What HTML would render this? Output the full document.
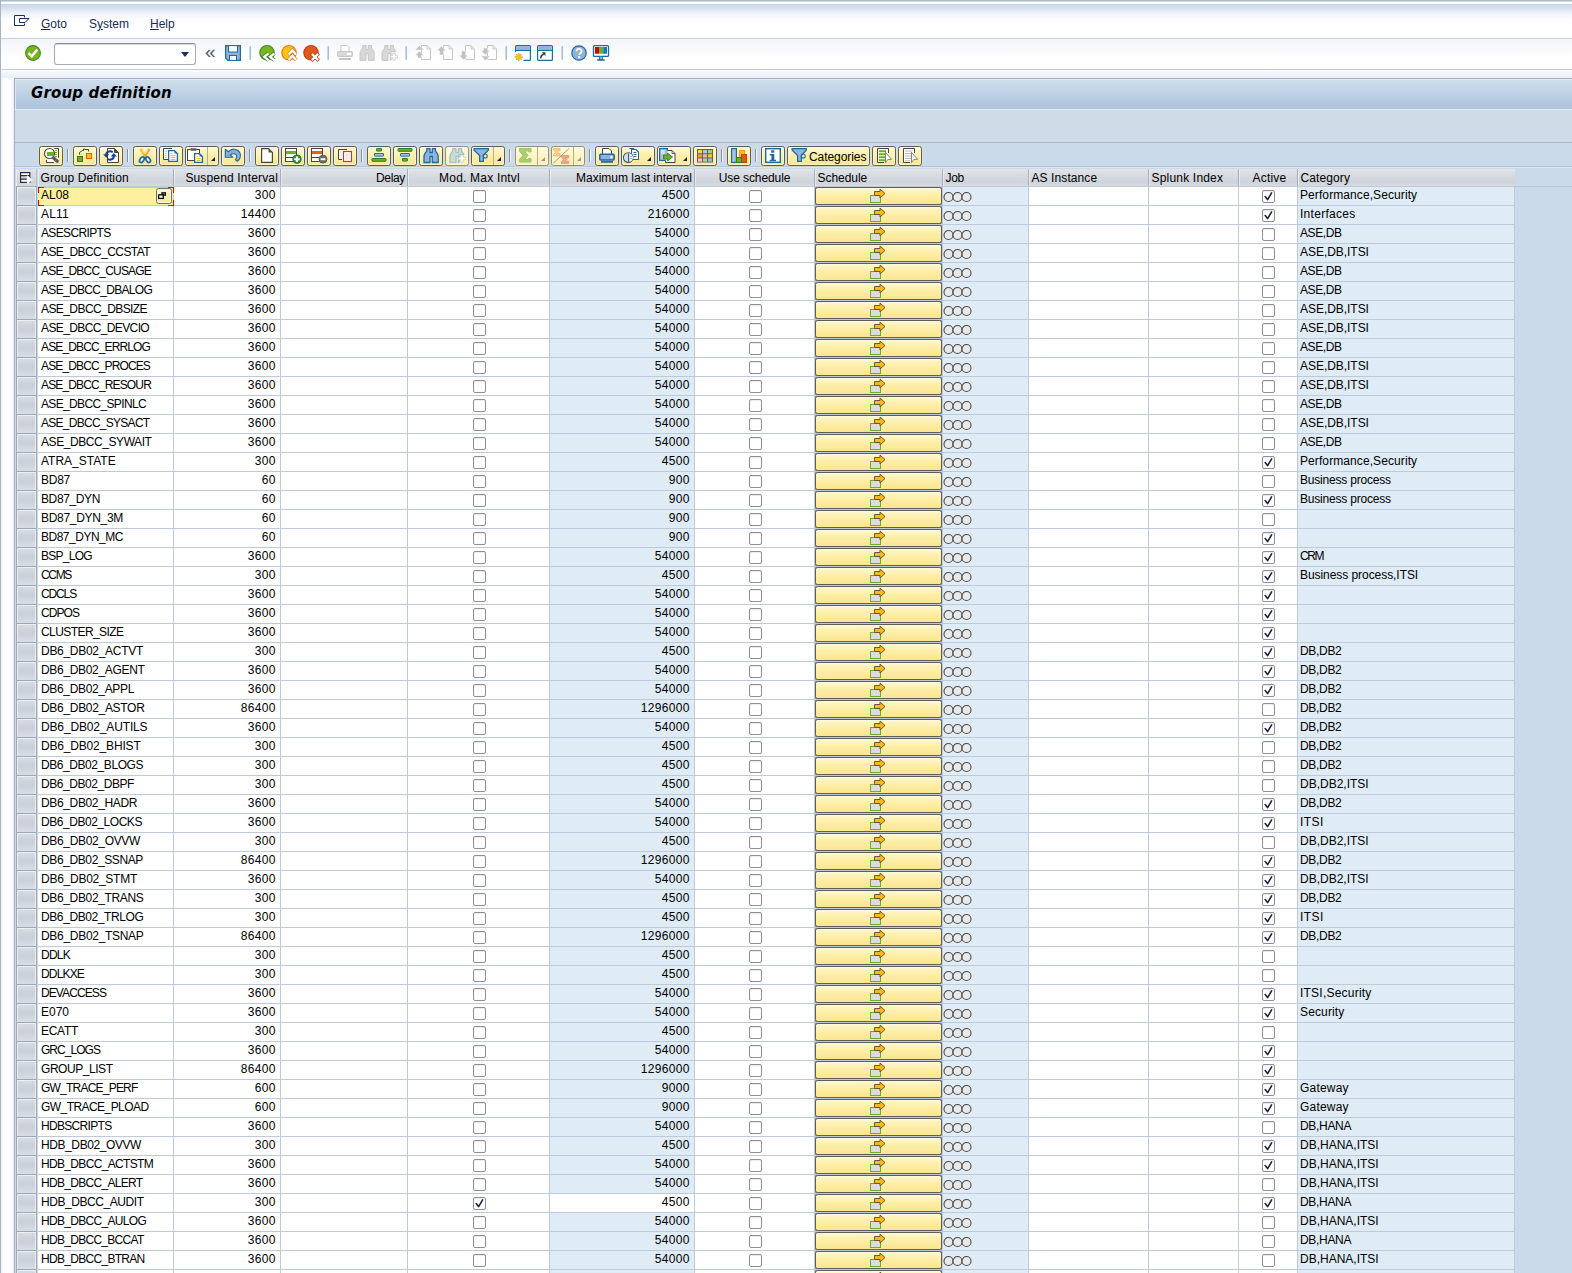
<!DOCTYPE html>
<html lang="en"><head><meta charset="utf-8"><title>Group definition</title>
<style>
html,body{margin:0;padding:0}
body{width:1572px;height:1273px;overflow:hidden;position:relative;background:#fff;font:12px/14px "Liberation Sans",sans-serif;color:#000}
div,i,b,span,svg{box-sizing:border-box}
svg{overflow:visible}
.abs{position:absolute}
#topgrad{position:absolute;left:0;top:0;width:1572px;height:38px;background:linear-gradient(#afbac7 0,#afbac7 1px,#d0dae8 1px,#d0dae8 2px,#fff 2px,#fff 4px,#c7d5e8 4px,#d6e0ed 8px,#eef2f8 13px,#fbfcfe 19px,#fff 24px)}
#l38{position:absolute;left:0;top:38px;width:1572px;height:1px;background:#c3ccda}
#tb{position:absolute;left:0;top:39px;width:1572px;height:30px;background:linear-gradient(#f2f5f9,#fafbfd 40%,#fff 70%)}
#l69{position:absolute;left:0;top:69px;width:1572px;height:1px;background:#c2cad7}
#strip{position:absolute;left:0;top:70px;width:1572px;height:8px;background:linear-gradient(#fff,#f4f6fb 30%,#e9eef7)}
#leftedge{position:absolute;left:0;top:0;width:1px;height:1273px;background:#a9b5c4}
#leftpad{position:absolute;left:1px;top:78px;width:13px;height:1195px;background:linear-gradient(90deg,#f1f2f4,#fdfdfd 3px,#fff 9px,#f4f6f9 12px,#e4e9f0)}
#title{position:absolute;left:14px;top:78px;width:1558px;height:31px;box-shadow:inset 1px 0 0 #dbe6f1;border-left:1px solid #9db0c8;border-top:1px solid #9db0c8;background:linear-gradient(#e6eef6 0,#e6eef6 1px,#cfdeec 1px,#bccfe3 55%,#abc2dc 100%)}
#title span{position:absolute;left:16px;top:5px;font:italic bold 15px/18px "DejaVu Sans","Liberation Sans",sans-serif;letter-spacing:0.15px;color:#000;white-space:nowrap}
#sub{position:absolute;left:14px;top:109px;width:1558px;height:33px;border-left:1px solid #a3b4ca;background:#cfdce8;border-top:1px solid #e3ebf3}
#l142{position:absolute;left:14px;top:142px;width:1558px;height:1px;background:#a7b6c8}
#panel{position:absolute;left:14px;top:143px;width:1558px;height:1130px;border-left:1px solid #a3b4ca;background:#cbdaea}
#l166{position:absolute;left:15px;top:166px;width:1557px;height:1px;background:#b7c6d8}
#l167{position:absolute;left:15px;top:167px;width:1557px;height:1px;background:#dbe6f1}
#l186{position:absolute;left:1515px;top:186px;width:57px;height:1px;background:#b7c5d7}
/* menu */
.menu{position:absolute;top:17px;color:#1a2a55;white-space:nowrap}
.menu u{text-decoration:underline;text-underline-offset:1px}
/* system toolbar */
.ti{position:absolute;top:45px;width:16px;height:16px}
.tsep{position:absolute;top:46px;width:2px;height:14px;margin-left:-1px;background:linear-gradient(90deg,#c9d9ef 50%,#a3bde0 50%);border-radius:1px}
#cmd{position:absolute;left:54px;top:43px;width:142px;height:22px;border:1px solid #a9abae;border-top-color:#8a8c8f;border-radius:3px;background:#fff;box-shadow:inset 0 1px 1px #d9d9d9}
#cmd:after{content:"";position:absolute;left:125.500px;top:7.500px;border:4.700px solid transparent;border-top:5px solid #1d2f5f;border-bottom:0}
/* alv toolbar */
.bt{position:absolute;top:146px;height:20px;width:24px;border:1px solid #5b5c5e;border-radius:2.5px;background:linear-gradient(#fff8d6,#fdf0ad 45%,#fbe58c);box-shadow:inset 0 0 0 1px rgba(255,250,215,.7), 0 0 0 1px rgba(255,236,150,.35)}
.bt svg{position:absolute;left:3px;top:1px}
.bt.w svg{left:1px}
.bt.dis{border-color:#908e86;background:linear-gradient(#fffbe6,#fef5c9 45%,#fdefb0)}
.bt .dd{position:absolute;right:0;top:0;width:11px;height:18px;border-left:1px solid #b9ae86}
.bt .dd:after{content:"";position:absolute;right:3px;bottom:4px;border:2.5px solid transparent;border-right-color:#1c1c2e;border-bottom-color:#1c1c2e}
.bt.dis .dd:after{border-right-color:#999;border-bottom-color:#999}
.bt .lbl{position:absolute;left:21px;top:3px;white-space:nowrap}
.bsep{position:absolute;top:149px;width:2px;height:13px;border-left:1px solid #8e8f92;border-right:1px solid #f4f7fa}
/* grid */
#grid{position:absolute;left:0;top:0;width:1572px;height:1273px;overflow:hidden}
#gridbg{position:absolute;left:16px;top:169px;width:1499px;height:1104px;background:#bec9d9}
.hrow{position:absolute;left:0;top:169px;height:17px;width:1572px}
.h{position:absolute;top:0;height:17px;line-height:19px;padding-top:0;white-space:nowrap;overflow:hidden;color:#000;background:linear-gradient(#e1e4e8,#d2d6dd 60%,#cfd4db 80%,#d9dde2);border-right:1px solid #a3afc0;padding:0 3px;box-shadow:inset 1px 0 0 rgba(255,255,255,.45)}
.h.l{text-align:left;padding-left:2.500px}.h.r{text-align:right;padding-right:2px}.h.c{text-align:center}
.h.c11{padding:0 1px 0 4px}
.h.c4{padding:0 2px 0 4px}
.row{position:absolute;left:0;height:18px;width:1572px}
.d{position:absolute;top:0;height:18px;line-height:17px;background:#fff;white-space:nowrap;overflow:hidden;padding:0 4.2px 0 3px}
.d.r{text-align:right}
.d.ro{background:#dfebf5}
.c0{left:16px;width:21px}
.d.c0{left:16px;width:21px;background:linear-gradient(#d8dce2,#cacfd8 50%,#d9dde3);border-left:1px solid #9aa8ba;border-right:1px solid #9aa8ba;padding:0;box-shadow:0 1px 0 #9aa8ba,0 -1px 0 #9aa8ba,inset 1px 1px 0 #eceef2,inset -1px 0 0 #eceef2;overflow:visible}
#v37{position:absolute;left:37px;top:169px;width:1px;height:1104px;background:#c9d9ea}
.c1{left:38px;width:135px}
.c2{left:174px;width:106px}
.c3{left:281px;width:126px}
.c4{left:408px;width:141px}
.c5{left:550px;width:144px}
.c6{left:695px;width:119px}
.c7{left:815px;width:127px}
.c8{left:943px;width:85px}
.c9{left:1029px;width:119px}
.c10{left:1149px;width:89px}
.c11{left:1239px;width:58px}
.c12{left:1298px;width:216px}
.d.c12{padding-left:2px}
.h.c1{width:136px}.h.c2{width:107px}.h.c3{width:127px}.h.c4{width:142px}.h.c5{width:145px}.h.c6{width:120px}.h.c7{width:128px}.h.c8{width:86px}.h.c9{width:120px}.h.c10{width:90px}.h.c11{width:59px}.h.c12{width:217px;border-right:0}
.h.c0{border-right:1px solid #b5c2d4;padding:0;width:21px}
.h.c0 svg{position:absolute;left:4px;top:3px}
.d.c7{padding:0;background:#8d98aa;overflow:visible}
.sb{position:absolute;left:0;top:0;width:127px;height:18px;border:1px solid #5e5d5a;border-radius:2.5px;background:linear-gradient(#fffbe3 0,#fff5c3 2px,#fdeea5 50%,#fbe690 100%)}
.sb svg{position:absolute;left:52px;top:-1px}
.d.c4,.d.c6,.d.c11{padding:0}
.cb{position:absolute;top:3px;width:13px;height:13px;border:1px solid #8d8f93;border-radius:2px;background:#fff;box-shadow:inset 0 1px 1px #ececee}
.cb svg{position:absolute;left:0;top:0}
.c4 .cb{left:65px}.c6 .cb{left:54px}.c11 .cb{left:23px}
.d.c8{padding:0}
.job{position:absolute;left:0;top:4px}
.foc{background:#fef09e !important;overflow:visible !important;box-shadow:inset 0 1px 0 #bccbdc}
.foc:before{content:"";position:absolute;left:0;top:0;width:136px;height:19px;
 background:
 linear-gradient(#e8000f,#e8000f) 0 0/6px 1px no-repeat,
 linear-gradient(#e8000f,#e8000f) 0 0/1px 6px no-repeat,
 linear-gradient(#e8000f,#e8000f) 100% 0/6px 1px no-repeat,
 linear-gradient(#e8000f,#e8000f) 100% 0/1px 6px no-repeat,
 linear-gradient(#e8000f,#e8000f) 0 100%/6px 1px no-repeat,
 linear-gradient(#e8000f,#e8000f) 0 100%/1px 6px no-repeat,
 linear-gradient(#e8000f,#e8000f) 100% 100%/6px 1px no-repeat,
 linear-gradient(#e8000f,#e8000f) 100% 100%/1px 6px no-repeat;z-index:3}
.f4{position:absolute;left:118px;top:1px;width:16px;height:16px;border:1px solid #6f6e6a;border-radius:2.5px;background:linear-gradient(#fffbe2,#fdf0b0 50%,#fce994);box-shadow:inset 0 0 0 1px rgba(255,251,225,.8)}
.f4 svg{position:absolute;left:0;top:0}

</style></head>
<body>
<div id="topgrad"></div><div id="l38"></div><div id="tb"></div><div id="l69"></div><div id="strip"></div>
<div id="leftpad"></div><div id="leftedge"></div>
<div id="title"><span>Group definition</span></div><div id="sub"></div><div id="l142"></div><div id="panel"></div><div id="l166"></div><div id="l167"></div><div id="l186"></div>
<div class="abs" style="left:14px;top:15px;width:16px;height:12px"><svg width="16" height="12" viewBox="0 0 16 12"><path d="M10.500 2.500 V0.500 H0.500 V10.500 H10.500 V8.500" fill="none" stroke="#1a2e5e"/><path d="M15 3.500 H5.500 V7.500 H11 Z" fill="none" stroke="#1a2e5e"/></svg></div>
<div class="menu" style="left:41px"><u>G</u>oto</div>
<div class="menu" style="left:89px">S<u>y</u>stem</div>
<div class="menu" style="left:150px"><u>H</u>elp</div>
<div class="ti" style="left:25px"><svg width="16" height="16" viewBox="0 0 16 16"><circle cx="8" cy="8" r="7.4" fill="#7ab51d" stroke="#3f8a2c" stroke-width="1.1"/><path d="M3.600 8.200 L6.800 11.300 L12.300 4.500" fill="none" stroke="#fff" stroke-width="2.400" stroke-linejoin="miter"/></svg></div>
<div id="cmd"></div>
<div class="abs" style="left:205px;top:42px;font-size:19px;line-height:20px;color:#595959">&laquo;</div>
<div class="ti" style="left:225px"><svg width="16" height="16" viewBox="0 0 16 16"><path d="M0.600 0.600 H15.400 V15.400 H3 L0.600 13 Z" fill="#8fb2dc" stroke="#1b6aa5" stroke-width="1.200"/><rect x="3.500" y="0.600" width="9" height="6.400" fill="#fff" stroke="#1b6aa5"/><rect x="4.500" y="10.500" width="7" height="4.900" fill="#fff" stroke="#1b6aa5"/></svg></div>
<div class="tsep" style="left:250px"></div>
<div class="ti" style="left:259px"><svg width="16" height="16" viewBox="0 0 16 16"><circle cx="8" cy="7.7" r="7.2" fill="#79b51c" stroke="#3f8a2c" stroke-width="1.1"/><path d="M9.6 8.3 L5.3 11.8 L9.6 15.3 M15.400 8.300 L11.100 11.800 L15.400 15.300" fill="none" stroke="#3a832b" stroke-width="3.7"/><path d="M9.6 8.3 L5.3 11.8 L9.6 15.3 M15.400 8.300 L11.100 11.800 L15.400 15.300" fill="none" stroke="#fff" stroke-width="2.3"/></svg></div>
<div class="ti" style="left:281px"><svg width="16" height="16" viewBox="0 0 16 16"><circle cx="8" cy="7.7" r="7.2" fill="#fdc414" stroke="#e8731a" stroke-width="1.1"/><path d="M7.700 9.600 L11.400 5.300 L15.100 9.600 M7.700 15.100 L11.400 10.800 L15.100 15.100" fill="none" stroke="#e8731a" stroke-width="3.7"/><path d="M7.700 9.600 L11.400 5.300 L15.100 9.600 M7.700 15.100 L11.400 10.800 L15.100 15.100" fill="none" stroke="#fff" stroke-width="2.3"/></svg></div>
<div class="ti" style="left:303px"><svg width="16" height="16" viewBox="0 0 16 16"><circle cx="8" cy="7.7" r="7.2" fill="#dd5a1b" stroke="#c2401a" stroke-width="1.1"/><path d="M9.700 9.700 L14.300 14.300 M14.300 9.700 L9.700 14.300" fill="none" stroke="#b8371a" stroke-width="3.700" stroke-linecap="square"/><path d="M9.700 9.700 L14.300 14.300 M14.300 9.700 L9.700 14.300" fill="none" stroke="#fff" stroke-width="2.300" stroke-linecap="square"/></svg></div>
<div class="tsep" style="left:328px"></div>
<div class="ti" style="left:337px"><svg width="16" height="16" viewBox="0 0 16 16"><path d="M4 6 V0.5 H10 L12 2.5 V6" fill="#fff" stroke="#c6c6c6"/><rect x="0.5" y="6.5" width="15" height="5" rx="1" fill="#d9d9d9" stroke="#c6c6c6"/><rect x="10" y="8" width="4" height="2" fill="#fff"/><rect x="2" y="13" width="12" height="2" fill="#c6c6c6"/></svg></div>
<div class="ti" style="left:359px"><svg width="16" height="16" viewBox="0 0 16 16"><path d="M3.800 0.600 H7 V4.500 H9.300 V0.600 H12.500 V3 C13.500 4.500 15.200 6 15.200 8 V15.400 H9.300 V8.500 H7 V15.400 H1 V8 C1 6 2.800 4.500 3.800 3 Z" fill="#d9d9d9" stroke="#c6c6c6"/></svg></div>
<div class="ti" style="left:381px"><svg width="16" height="16" viewBox="0 0 16 16"><path d="M3.800 0.600 H7 V4.500 H9.300 V0.600 H12.500 V3 C13.300 4.300 14.300 5.300 14.800 6.500 H10 V15.400 H9.300 V8.500 H7 V15.400 H1 V8 C1 6 2.800 4.500 3.800 3 Z" fill="#d9d9d9" stroke="#c6c6c6"/><path d="M11.800 8 H14.200 V10.300 H16.500 V12.700 H14.200 V15 H11.800 V12.700 H9.500 V10.300 H11.800 Z" fill="#fff" stroke="#c6c6c6" stroke-width="0.800"/></svg></div>
<div class="tsep" style="left:406px"></div>
<div class="ti" style="left:415px"><svg width="16" height="16" viewBox="0 0 16 16"><path d="M6.500 0.500 H12 L15.500 4 V14.500 H6.500 Z" fill="#fff" stroke="#c6c6c6"/><path d="M12 0.500 V4 H15.500" fill="none" stroke="#c6c6c6"/><path d="M4.500 0.500 L9 5 H0 Z M4.500 6 L9 10.500 H6.500 V13 H2.500 V10.500 H0 Z" fill="#c2c2c2" stroke="#fff" stroke-width="0.500"/></svg></div>
<div class="ti" style="left:437px"><svg width="16" height="16" viewBox="0 0 16 16"><path d="M6.500 0.500 H12 L15.500 4 V14.500 H6.500 Z" fill="#fff" stroke="#c6c6c6"/><path d="M12 0.500 V4 H15.500" fill="none" stroke="#c6c6c6"/><path d="M4.500 1 L9 5.800 H6.500 V10 H2.500 V5.800 H0 Z" fill="#c2c2c2" stroke="#fff" stroke-width="0.500"/></svg></div>
<div class="ti" style="left:459px"><svg width="16" height="16" viewBox="0 0 16 16"><path d="M6.500 0.500 H12 L15.500 4 V14.500 H6.500 Z" fill="#fff" stroke="#c6c6c6"/><path d="M12 0.500 V4 H15.500" fill="none" stroke="#c6c6c6"/><path d="M4.500 15 L9 10.200 H6.500 V6 H2.500 V10.200 H0 Z" fill="#c2c2c2" stroke="#fff" stroke-width="0.500"/></svg></div>
<div class="ti" style="left:481px"><svg width="16" height="16" viewBox="0 0 16 16"><path d="M6.500 0.500 H12 L15.500 4 V14.500 H6.500 Z" fill="#fff" stroke="#c6c6c6"/><path d="M12 0.500 V4 H15.500" fill="none" stroke="#c6c6c6"/><path d="M4.500 15.500 L9 11 H0 Z M4.500 10 L9 5.500 H6.500 V3 H2.500 V5.500 H0 Z" fill="#c2c2c2" stroke="#fff" stroke-width="0.500"/></svg></div>
<div class="tsep" style="left:506px"></div>
<div class="ti" style="left:515px"><svg width="16" height="16" viewBox="0 0 16 16"><path d="M8.500 15.400 H14.400 Q15.400 15.400 15.400 14.400 V1.600 Q15.400 0.600 14.400 0.600 H1.600 Q0.600 0.600 0.600 1.600 V7" fill="#fff" stroke="#1b6aa5" stroke-width="1.200"/><rect x="1.200" y="1.200" width="13.600" height="3.800" fill="#8fb3dc"/><path d="M0.600 5.500 H15.400" stroke="#1b6aa5"/><path d="M6.30 12.00 L7.80 12.00 M5.54 13.84 L6.60 14.90 M3.70 14.60 L3.70 16.10 M1.86 13.84 L0.80 14.90 M1.10 12.00 L-0.40 12.00 M1.86 10.16 L0.80 9.10 M3.70 9.40 L3.70 7.90 M5.54 10.16 L6.60 9.10" stroke="#f39a1d" stroke-width="1.300"/><circle cx="3.700" cy="12" r="2.600" fill="#fdc414" stroke="#f7a81c" stroke-width="0.600"/></svg></div>
<div class="ti" style="left:537px"><svg width="16" height="16" viewBox="0 0 16 16"><rect x="0.600" y="0.600" width="14.800" height="14.800" rx="1" fill="#fff" stroke="#1b6aa5" stroke-width="1.200"/><rect x="1.200" y="1.200" width="13.600" height="3.800" fill="#8fb3dc"/><path d="M0.600 5.500 H15.400" stroke="#1b6aa5"/><path d="M3.800 13.400 C3.600 11 4.800 9.700 6.800 9.200" fill="none" stroke="#3a3a3a" stroke-width="1.600"/><path d="M4.600 7.200 H8.400 V11 Z" fill="#3a3a3a"/></svg></div>
<div class="tsep" style="left:562px"></div>
<div class="ti" style="left:571px"><svg width="16" height="16" viewBox="0 0 16 16"><circle cx="8" cy="8" r="7.2" fill="#8fb3dc" stroke="#1b6aa5" stroke-width="1.2"/><path d="M5.6 6.3 C5.6 3.2 10.6 3.2 10.6 6.2 C10.6 8.2 8.2 8 8.2 10" fill="none" stroke="#fff" stroke-width="1.8"/><rect x="7.2" y="11.2" width="2" height="2" fill="#fff"/></svg></div>
<div class="ti" style="left:593px"><svg width="16" height="16" viewBox="0 0 16 16"><rect x="0.500" y="0.600" width="15" height="10.800" rx="1" fill="#fff" stroke="#1b6aa5" stroke-width="1.300"/><rect x="2" y="2" width="4" height="6.700" fill="#d40000"/><rect x="6" y="2" width="4.200" height="6.700" fill="#6db01f"/><rect x="10.200" y="2" width="3.800" height="6.700" fill="#0a7ac4"/><rect x="6.500" y="11.400" width="3" height="3.200" fill="#8fb3dc" stroke="#1b6aa5" stroke-width="0.800"/><rect x="4.200" y="14.300" width="7.700" height="1.500" rx="0.500" fill="#1b6aa5"/></svg></div>
<div class="bt" style="left:39px;width:24px"><svg width="16" height="16" viewBox="0 0 16 16"><path d="M11.5 0.5 H15.5 V9.5" fill="none" stroke="#444"/><path d="M3.5 12 V14.5 H10.5" fill="none" stroke="#444"/><rect x="4" y="1" width="11" height="13" fill="#fff"/><path d="M11.5 0.5 H15.5 V9.5 M3.5 12 V14.5 H10.5" fill="none" stroke="#444"/><circle cx="6.5" cy="5.500" r="5" fill="#fff" stroke="#444" stroke-width="1.100"/><rect x="4" y="4" width="7" height="4" fill="#6db01f"/><path d="M12 2.500 H14 M12 4.500 H14 M12 6.500 H14 M12 8.500 H14" stroke="#6db01f"/><path d="M10.600 10 L14.300 13.300" stroke="#5c5c5c" stroke-width="3.200" stroke-linecap="round"/></svg></div>
<div class="bsep" style="left:67px"></div>
<div class="bt" style="left:73px;width:24px"><svg width="16" height="16" viewBox="0 0 16 16"><rect x="0.500" y="8.500" width="5" height="5" fill="#6db01f" stroke="#2f7d32"/><rect x="9.500" y="5.500" width="5" height="5" fill="#fdc414" stroke="#e0601b"/><path d="M2.500 6.500 V4.500 L5.500 2.500 H6.500 V1 H7.500 V1.500 H11.500 V3.500" fill="none" stroke="#444"/></svg></div>
<div class="bt" style="left:99px;width:24px"><svg width="16" height="16" viewBox="0 0 16 16"><path d="M4.500 0.500 H11.500 L15.500 4.500 V14.500 H4.500 Z" fill="#fff" stroke="#444"/><path d="M11.500 0.500 V4.500 H15.500 Z" fill="#555" stroke="#444"/><path d="M0.200 6.300 H6.200 L3.200 9.800 Z" fill="#1c3f94"/><path d="M3.200 7 C3 4 6.500 2.300 9.800 4.200" fill="none" stroke="#1c3f94" stroke-width="2"/><path d="M7.800 8.500 H13.800 L10.800 5 Z" fill="#1c3f94"/><path d="M10.800 8 C11 11 7.500 12.700 4.200 10.800" fill="none" stroke="#1c3f94" stroke-width="2"/></svg></div>
<div class="bsep" style="left:127px"></div>
<div class="bt" style="left:133px;width:24px"><svg width="16" height="16" viewBox="0 0 16 16"><path d="M3.700 1 L8.400 8" stroke="#fdb913" stroke-width="2.700"/><path d="M12.300 1 L7.600 8" stroke="#f5a31a" stroke-width="2.700"/><path d="M5 1.500 L8 6 L11 1.500" fill="none" stroke="#fff6d5" stroke-width="0.900"/><ellipse cx="4.900" cy="11.700" rx="1.900" ry="3.100" transform="rotate(32 4.900 11.700)" fill="#fff" stroke="#1b6aa5" stroke-width="1.700"/><ellipse cx="11.100" cy="11.700" rx="1.900" ry="3.100" transform="rotate(-32 11.100 11.700)" fill="#fff" stroke="#1b6aa5" stroke-width="1.700"/></svg></div>
<div class="bt" style="left:159px;width:24px"><svg width="16" height="16" viewBox="0 0 16 16"><path d="M9 0.500 H0.500 V11.500 H5" fill="#fff" stroke="#444"/><path d="M2 3.500 H3.500 M2 5.500 H3.500 M2 7.500 H3.500 M2 9.500 H3.500" stroke="#b5b5b5"/><path d="M5.600 2.600 H11.500 L14.400 5.500 V13.400 H5.600 Z" fill="#fff" stroke="#1b6aa5" stroke-width="1.300"/><path d="M11.500 2.600 V5.500 H14.400 Z" fill="#1b6aa5"/><path d="M7.500 5.500 H9.500 M7.500 7.500 H12.500 M7.500 9.500 H12.500 M7.500 11.500 H12.500" stroke="#fdb913" stroke-width="1.200"/></svg></div>
<div class="bt w" style="left:185px;width:34px"><svg width="16" height="16" viewBox="0 0 16 16"><rect x="0.500" y="1.500" width="12" height="11" fill="#fff" stroke="#444"/><rect x="3.300" y="0.300" width="6.600" height="2.500" rx="1.200" fill="#5a5a5a"/><path d="M7.600 5.600 H12.500 L15.400 8.500 V14.400 H7.600 Z" fill="#fff" stroke="#1b6aa5" stroke-width="1.300"/><path d="M12.500 5.600 V8.500 H15.400 Z" fill="#1b6aa5"/><path d="M9.500 8.500 H11 M9.500 10.500 H13.500 M9.500 12.500 H13.500" stroke="#fdb913" stroke-width="1.200"/></svg><i class="dd"></i></div>
<div class="bt" style="left:221px;width:24px"><svg width="16" height="16" viewBox="0 0 16 16"><path d="M0.300 1.300 V9.300 H8 L5.300 7 C7.500 5 11.300 5.300 11.800 8.300 C12 10 11 11 10.200 11.600 L12.300 13.300 C15 11.500 16.300 8 14.700 4.600 C12.700 0.600 7 -0.200 3.300 3.700 Z" fill="#86afd8" stroke="#1b6aa5" stroke-width="1.100" stroke-linejoin="round"/></svg></div>
<div class="bsep" style="left:249px"></div>
<div class="bt" style="left:255px;width:24px"><svg width="16" height="16" viewBox="0 0 16 16"><path d="M2.600 0.600 H9.500 L13.400 4.500 V14.400 H2.600 Z" fill="#fff" stroke="#444" stroke-width="1.200"/><path d="M9.500 0.600 V4.500 H13.400 Z" fill="#555"/></svg></div>
<div class="bt" style="left:281px;width:24px"><svg width="16" height="16" viewBox="0 0 16 16"><rect x="0.500" y="0.500" width="11" height="13" fill="#fff" stroke="#444"/><rect x="1" y="3" width="10" height="3" fill="#6db01f"/><path d="M0.500 9.500 H11.500" stroke="#444"/><circle cx="12" cy="11.200" r="4.100" fill="#348f41" stroke="#24702f" stroke-width="1"/><path d="M12 8.500 V13.900 M9.300 11.200 H14.700" stroke="#fff" stroke-width="2.100"/></svg></div>
<div class="bt" style="left:307px;width:24px"><svg width="16" height="16" viewBox="0 0 16 16"><rect x="0.500" y="0.500" width="11" height="13" fill="#fff" stroke="#444"/><rect x="1" y="3" width="10" height="3" fill="#e0601b"/><path d="M0.500 9.500 H11.500" stroke="#444"/><circle cx="12" cy="11.200" r="3.900" fill="#6e6e6e" stroke="#555" stroke-width="1"/><path d="M9.600 11.200 H14.400" stroke="#fff" stroke-width="2"/></svg></div>
<div class="bt" style="left:333px;width:24px"><svg width="16" height="16" viewBox="0 0 16 16"><path d="M10 1.500 H1.500 V11.500 H5" fill="#f2f2f2" stroke="#444"/><rect x="6.600" y="3.600" width="7.800" height="9.800" fill="#ececec" stroke="#c0392b" stroke-width="1.300"/><rect x="7.700" y="4.700" width="5.600" height="7.600" fill="none" stroke="#fff" stroke-width="0.900"/></svg></div>
<div class="bsep" style="left:361px"></div>
<div class="bt" style="left:367px;width:24px"><svg width="16" height="16" viewBox="0 0 16 16"><rect x="5.500" y="0.500" width="5" height="2.600" rx="0.400" fill="#6db01f" stroke="#2f7d32"/><rect x="3.500" y="5.500" width="9" height="2.600" rx="0.400" fill="#a8c4e2" stroke="#1b6aa5"/><rect x="1" y="10.500" width="14" height="2.800" rx="0.400" fill="#6db01f" stroke="#2f7d32"/></svg></div>
<div class="bt" style="left:393px;width:24px"><svg width="16" height="16" viewBox="0 0 16 16"><rect x="1" y="0.500" width="14" height="2.800" rx="0.400" fill="#6db01f" stroke="#2f7d32"/><rect x="3.500" y="5.500" width="9" height="2.600" rx="0.400" fill="#a8c4e2" stroke="#1b6aa5"/><rect x="5.500" y="10.500" width="5" height="2.600" rx="0.400" fill="#6db01f" stroke="#2f7d32"/></svg></div>
<div class="bt" style="left:419px;width:24px"><svg width="16" height="16" viewBox="0 0 16 16"><path d="M3.800 0.600 H7 V4.500 H9.300 V0.600 H12.500 V3 C13.500 4.500 15.200 6 15.200 8 V14.500 H9.300 V8.500 H7 V14.500 H1 V8 C1 6 2.800 4.500 3.800 3 Z" fill="#8fb3dc" stroke="#1b6aa5" stroke-width="1.300" stroke-linejoin="round"/></svg></div>
<div class="bt dis" style="left:445px;width:24px"><svg width="16" height="16" viewBox="0 0 16 16"><path d="M3.800 0.600 H7 V4.500 H9.300 V0.600 H12.500 V3 C13.300 4.300 14.300 5.300 14.800 6.500 H10 V14.500 H9.300 V8.500 H7 V14.500 H1 V8 C1 6 2.800 4.500 3.800 3 Z" fill="#cbdbd6" stroke="#9fc0c4" stroke-width="1.200" stroke-linejoin="round"/><path d="M11.800 7 H14.200 V9.300 H16.500 V11.700 H14.200 V14 H11.800 V11.700 H9.500 V9.300 H11.800 Z" fill="#fff" stroke="#c3cfcc" stroke-width="0.800"/></svg></div>
<div class="bt w" style="left:471px;width:34px"><svg width="16" height="16" viewBox="0 0 16 16"><path d="M1 0.600 H15.400 V2 L10.400 7.500 V13.400 H6.600 V7.500 L1 2 Z" fill="#8fb3dc" stroke="#1b6aa5" stroke-width="1.200" stroke-linejoin="round"/><circle cx="12.200" cy="8" r="2" fill="none" stroke="#1b6aa5" stroke-width="1.100"/></svg><i class="dd"></i></div>
<div class="bsep" style="left:509px"></div>
<div class="bt dis w" style="left:515px;width:34px"><svg width="16" height="16" viewBox="0 0 16 16"><path d="M2.500 0.500 H14 V4 H11.500 V3 H7.500 L11 7.300 L7.500 11.500 H11.500 V10.500 H14 V14 H2.500 V11.500 L6 7.300 L2.500 3 Z" fill="#a9d06f" stroke="#9bc463" stroke-width="1"/></svg><i class="dd"></i></div>
<div class="bt dis w" style="left:551px;width:34px"><svg width="16" height="16" viewBox="0 0 16 16"><path d="M0.500 0.500 H7 V3 H5.500 V2.500 H3.500 L5.500 4.200 L3.500 6 H5.500 V5.500 H7 V8 H0.500 V6.500 L2.500 4.200 L0.500 2 Z" fill="#fcd58a" stroke="#f7b36b" stroke-width="0.800"/><path d="M8.500 7.500 H15.500 V10 H14 V9.500 H12 L14 11.500 L12 13.500 H14 V13 H15.500 V15.500 H8.500 V14 L10.500 11.500 L8.500 9 Z" fill="#f0a97f" stroke="#e6926a" stroke-width="0.800"/><path d="M0 15.500 L16 0.500" stroke="#777" stroke-width="0.700"/></svg><i class="dd"></i></div>
<div class="bsep" style="left:589px"></div>
<div class="bt" style="left:595px;width:24px"><svg width="16" height="16" viewBox="0 0 16 16"><path d="M3.500 6 V0.500 H10 L12.500 3 V6" fill="#fff" stroke="#444"/><rect x="0.800" y="6.300" width="14.400" height="5.600" rx="1" fill="#8fb3dc" stroke="#1b6aa5" stroke-width="1.500"/><rect x="11.500" y="8" width="2" height="2.300" fill="#fff"/><path d="M2 13.900 H14" stroke="#1b6aa5" stroke-width="1.700"/></svg></div>
<div class="bt w" style="left:621px;width:34px"><svg width="16" height="16" viewBox="0 0 16 16"><path d="M6.500 0.500 H11 V6" fill="#fff" stroke="#1b6aa5"/><path d="M8.500 1.500 H13 L15.500 4 V11.500 H8.500 Z" fill="#fff" stroke="#1b6aa5" stroke-width="1.100"/><path d="M10.500 4.500 H13.500 M10.500 6.500 H13.500 M10.500 8.500 H13.500" stroke="#1b6aa5"/><circle cx="5.200" cy="9.600" r="4.800" fill="#d3dde8" stroke="#555" stroke-width="1.100"/><path d="M5.700 5.500 V13.700" stroke="#1b6aa5" stroke-width="1.400"/><path d="M6.500 5.400 A4.300 4.300 0 0 1 6.500 13.800 Z" fill="#fff"/><path d="M7 8.500 H9 M7 10.500 H9" stroke="#aaa" stroke-width="0.900"/></svg><i class="dd" style="border-left:0"></i></div>
<div class="bt w" style="left:657px;width:34px"><svg width="16" height="16" viewBox="0 0 16 16"><rect x="0.600" y="0.600" width="7.800" height="11.800" fill="#a8c4e2" stroke="#1b6aa5" stroke-width="1.200"/><path d="M2 3 H5.500 M2 5 H5.500" stroke="#fff"/><path d="M8.500 2.500 H13 L16 5.500 V14.500 H6.500 V12.500" fill="#fff" stroke="#444"/><path d="M13 2.500 V5.500 H16" fill="none" stroke="#444" stroke-width="0.800"/><path d="M4.500 7 H8.500 V5 L13.500 9 L8.500 13 V11 H4.500 Z" fill="#6db01f" stroke="#2f7d32" stroke-width="0.900"/></svg><i class="dd" style="border-left:0"></i></div>
<div class="bt" style="left:693px;width:24px"><svg width="17" height="16" viewBox="0 0 17 16"><rect x="0" y="1" width="16" height="13.500" fill="#5f5f5f"/><rect x="1" y="2" width="4" height="3.300" fill="#fdd04a"/><rect x="6" y="2" width="4" height="3.300" fill="#a9c6e4"/><rect x="11" y="2" width="4" height="3.300" fill="#a5d07c"/><rect x="1" y="6.2" width="4" height="3.300" fill="#f7981d"/><rect x="6" y="6.2" width="4" height="3.300" fill="#e9b8a6"/><rect x="11" y="6.2" width="4" height="3.300" fill="#fdc414"/><rect x="1" y="10.4" width="4" height="3.300" fill="#f7bcc6"/><rect x="6" y="10.4" width="4" height="3.300" fill="#a9d58f"/><rect x="11" y="10.4" width="4" height="3.300" fill="#94bce3"/></svg></div>
<div class="bsep" style="left:721px"></div>
<div class="bt" style="left:727px;width:24px"><svg width="16" height="16" viewBox="0 0 16 16"><rect x="0.600" y="0.600" width="4.800" height="13.800" fill="#a8c4e2" stroke="#1b6aa5" stroke-width="1.200"/><rect x="8.500" y="2.500" width="5" height="8" fill="#fdc414" stroke="#f7981d"/><rect x="10.500" y="6.500" width="5" height="8" fill="#dd5a1b" stroke="#c2401a"/><rect x="5.500" y="9.500" width="5" height="5" fill="#6db01f" stroke="#2f7d32"/></svg></div>
<div class="bsep" style="left:755px"></div>
<div class="bt" style="left:761px;width:24px"><svg width="16" height="16" viewBox="0 0 16 16"><rect x="0.700" y="0.700" width="14.600" height="13.600" fill="#fff" stroke="#1b6aa5" stroke-width="1.400"/><rect x="6.200" y="2.300" width="3.100" height="2.400" fill="#1b6aa5"/><path d="M4.700 6 H9.300 V11.800 H11 V13.200 H4.700 V11.800 H6.400 V7.500 H4.700 Z" fill="#1b6aa5"/></svg></div>
<div class="bt" style="left:787px;width:83px"><svg width="16" height="16" viewBox="0 0 16 16"><path d="M1 0.600 H15.400 V2 L10.400 7.500 V13.400 H6.600 V7.500 L1 2 Z" fill="#8fb3dc" stroke="#1b6aa5" stroke-width="1.200" stroke-linejoin="round"/><circle cx="12.200" cy="8" r="2" fill="none" stroke="#1b6aa5" stroke-width="1.100"/></svg><span class="lbl" style="letter-spacing:-0.07px">Categories</span></div>
<div class="bt" style="left:872px;width:24px"><svg width="16" height="16" viewBox="0 0 16 16"><path d="M12.500 5 V0.500 H1.500 V14.500 H8" fill="#fff" stroke="#444"/><path d="M3 3.300 H10 M3 6.300 H10 M3 9.300 H10 M3 12.300 H9" stroke="#6db01f" stroke-width="2"/><path d="M9.500 4.300 L15.500 11.300 L11.800 11.500 L9.500 14.700 Z" fill="#fff" stroke="#777" stroke-width="0.900"/></svg></div>
<div class="bt" style="left:898px;width:24px"><svg width="16" height="16" viewBox="0 0 16 16"><path d="M12.500 5 V0.500 H1.500 V14.500 H8" fill="#fff" stroke="#444"/><path d="M3 3 H10 M3 5.500 H10 M3 8 H10 M3 10.500 H10 M3 12.800 H8" stroke="#b8b8b8" stroke-width="1"/><path d="M9.500 4.300 L15.500 11.300 L11.800 11.500 L9.500 14.700 Z" fill="#fff" stroke="#777" stroke-width="0.900"/></svg></div>
<div id="grid"><div id="gridbg"></div>
<div class="hrow"><div class="h c0"><svg width="13" height="12" viewBox="0 0 13 12"><rect x="0.600" y="0.600" width="9.200" height="9.800" fill="#fff" stroke="#262a45" stroke-width="1.200"/><rect x="1.200" y="4.200" width="5.500" height="2.300" fill="#cfcfcf"/><path d="M0.600 3.600 H9.800 M0.600 7.100 H8" stroke="#262a45" stroke-width="1.100"/><path d="M7.300 3.800 L12.300 8.200 L9.900 8.700 L8.600 11.600 L7.300 11 Z" fill="#fff" stroke="#fff" stroke-width="0.800" stroke-linejoin="round"/><path d="M7.300 3.800 L12.300 8.200 L9.900 8.700" fill="none" stroke="#e8eaee" stroke-width="0.300"/></svg></div><div class="h c1 l"><span style="letter-spacing:0.09px">Group Definition</span></div><div class="h c2 r"><span style="letter-spacing:0.16px">Suspend Interval</span></div><div class="h c3 r"><span style="letter-spacing:-0.34px">Delay</span></div><div class="h c4 c"><span style="letter-spacing:0.20px">Mod. Max Intvl</span></div><div class="h c5 r"><span>Maximum last interval</span></div><div class="h c6 c"><span style="letter-spacing:-0.08px">Use schedule</span></div><div class="h c7 l"><span style="letter-spacing:-0.04px">Schedule</span></div><div class="h c8 l"><span style="letter-spacing:-0.28px">Job</span></div><div class="h c9 l"><span style="letter-spacing:0.09px">AS Instance</span></div><div class="h c10 l"><span style="letter-spacing:0.19px">Splunk Index</span></div><div class="h c11 c"><span style="letter-spacing:0.20px">Active</span></div><div class="h c12 l"><span style="letter-spacing:0.10px">Category</span></div></div>
<div class="row" style="top:187px"><div class="d c0"></div><div class="d c1 foc"><span>AL08</span><b class="f4"><svg width="12" height="12" viewBox="0 0 12 12"><rect x="4.900" y="3.800" width="3.500" height="2.400" fill="#9a9a9a" stroke="#0a0a0a" stroke-width="1.200"/><rect x="1.600" y="5.900" width="4.700" height="3.500" fill="#fff" stroke="#0a0a0a" stroke-width="1.300"/></svg></b></div><div class="d c2 r"><span style="letter-spacing:0.33px">300</span></div><div class="d c3"></div><div class="d c4 c"><i class="cb"></i></div><div class="d c5 r ro"><span style="letter-spacing:0.33px">4500</span></div><div class="d c6 c"><i class="cb"></i></div><div class="d c7"><div class="sb"><svg width="20" height="18" viewBox="0 0 20 18"><rect x="2.500" y="8.500" width="10" height="7" fill="#dcdcdc" stroke="#6ab023"/><path d="M6.500 4.500 H12 V2 L17 6.500 L12 11 V8.500 H6.500 Z" fill="#fdb913" stroke="#544e40" stroke-width="0.900"/></svg></div></div><div class="d c8 ro"><svg class="job" width="30" height="12" viewBox="0 0 30 12"><circle cx="5.5" cy="6" r="4.5" fill="#e9e9e9" stroke="#4c4c4c" stroke-width="1.1" /><circle cx="14.500" cy="6" r="4.5" fill="#e9e9e9" stroke="#4c4c4c" stroke-width="1.1"/><circle cx="23.500" cy="6" r="4.5" fill="#e9e9e9" stroke="#4c4c4c" stroke-width="1.1"/></svg></div><div class="d c9"></div><div class="d c10"></div><div class="d c11 c"><i class="cb"><svg width="11" height="11" viewBox="0 0 11 11"><path d="M2.2 5.6 L4.6 8.6 L8.6 1.9" fill="none" stroke="#1f2140" stroke-width="1.6" stroke-linecap="round" stroke-linejoin="round"/></svg></i></div><div class="d c12 ro"><span style="letter-spacing:0.09px">Performance,Security</span></div></div>
<div class="row" style="top:206px"><div class="d c0"></div><div class="d c1"><span style="letter-spacing:0.22px">AL11</span></div><div class="d c2 r"><span style="letter-spacing:0.33px">14400</span></div><div class="d c3"></div><div class="d c4 c"><i class="cb"></i></div><div class="d c5 r ro"><span style="letter-spacing:0.33px">216000</span></div><div class="d c6 c"><i class="cb"></i></div><div class="d c7"><div class="sb"><svg width="20" height="18" viewBox="0 0 20 18"><rect x="2.500" y="8.500" width="10" height="7" fill="#dcdcdc" stroke="#6ab023"/><path d="M6.500 4.500 H12 V2 L17 6.500 L12 11 V8.500 H6.500 Z" fill="#fdb913" stroke="#544e40" stroke-width="0.900"/></svg></div></div><div class="d c8 ro"><svg class="job" width="30" height="12" viewBox="0 0 30 12"><circle cx="5.5" cy="6" r="4.5" fill="#e9e9e9" stroke="#4c4c4c" stroke-width="1.1" /><circle cx="14.500" cy="6" r="4.5" fill="#e9e9e9" stroke="#4c4c4c" stroke-width="1.1"/><circle cx="23.500" cy="6" r="4.5" fill="#e9e9e9" stroke="#4c4c4c" stroke-width="1.1"/></svg></div><div class="d c9"></div><div class="d c10"></div><div class="d c11 c"><i class="cb"><svg width="11" height="11" viewBox="0 0 11 11"><path d="M2.2 5.6 L4.6 8.6 L8.6 1.9" fill="none" stroke="#1f2140" stroke-width="1.6" stroke-linecap="round" stroke-linejoin="round"/></svg></i></div><div class="d c12 ro"><span style="letter-spacing:0.28px">Interfaces</span></div></div>
<div class="row" style="top:225px"><div class="d c0"></div><div class="d c1"><span style="letter-spacing:-0.65px">ASESCRIPTS</span></div><div class="d c2 r"><span style="letter-spacing:0.33px">3600</span></div><div class="d c3"></div><div class="d c4 c"><i class="cb"></i></div><div class="d c5 r ro"><span style="letter-spacing:0.33px">54000</span></div><div class="d c6 c"><i class="cb"></i></div><div class="d c7"><div class="sb"><svg width="20" height="18" viewBox="0 0 20 18"><rect x="2.500" y="8.500" width="10" height="7" fill="#dcdcdc" stroke="#6ab023"/><path d="M6.500 4.500 H12 V2 L17 6.500 L12 11 V8.500 H6.500 Z" fill="#fdb913" stroke="#544e40" stroke-width="0.900"/></svg></div></div><div class="d c8 ro"><svg class="job" width="30" height="12" viewBox="0 0 30 12"><circle cx="5.5" cy="6" r="4.5" fill="#e9e9e9" stroke="#4c4c4c" stroke-width="1.1" /><circle cx="14.500" cy="6" r="4.5" fill="#e9e9e9" stroke="#4c4c4c" stroke-width="1.1"/><circle cx="23.500" cy="6" r="4.5" fill="#e9e9e9" stroke="#4c4c4c" stroke-width="1.1"/></svg></div><div class="d c9"></div><div class="d c10"></div><div class="d c11 c"><i class="cb"></i></div><div class="d c12 ro"><span style="letter-spacing:-0.42px">ASE,DB</span></div></div>
<div class="row" style="top:244px"><div class="d c0"></div><div class="d c1"><span style="letter-spacing:-0.57px">ASE_DBCC_CCSTAT</span></div><div class="d c2 r"><span style="letter-spacing:0.33px">3600</span></div><div class="d c3"></div><div class="d c4 c"><i class="cb"></i></div><div class="d c5 r ro"><span style="letter-spacing:0.33px">54000</span></div><div class="d c6 c"><i class="cb"></i></div><div class="d c7"><div class="sb"><svg width="20" height="18" viewBox="0 0 20 18"><rect x="2.500" y="8.500" width="10" height="7" fill="#dcdcdc" stroke="#6ab023"/><path d="M6.500 4.500 H12 V2 L17 6.500 L12 11 V8.500 H6.500 Z" fill="#fdb913" stroke="#544e40" stroke-width="0.900"/></svg></div></div><div class="d c8 ro"><svg class="job" width="30" height="12" viewBox="0 0 30 12"><circle cx="5.5" cy="6" r="4.5" fill="#e9e9e9" stroke="#4c4c4c" stroke-width="1.1" /><circle cx="14.500" cy="6" r="4.5" fill="#e9e9e9" stroke="#4c4c4c" stroke-width="1.1"/><circle cx="23.500" cy="6" r="4.5" fill="#e9e9e9" stroke="#4c4c4c" stroke-width="1.1"/></svg></div><div class="d c9"></div><div class="d c10"></div><div class="d c11 c"><i class="cb"></i></div><div class="d c12 ro"><span style="letter-spacing:-0.04px">ASE,DB,ITSI</span></div></div>
<div class="row" style="top:263px"><div class="d c0"></div><div class="d c1"><span style="letter-spacing:-0.80px">ASE_DBCC_CUSAGE</span></div><div class="d c2 r"><span style="letter-spacing:0.33px">3600</span></div><div class="d c3"></div><div class="d c4 c"><i class="cb"></i></div><div class="d c5 r ro"><span style="letter-spacing:0.33px">54000</span></div><div class="d c6 c"><i class="cb"></i></div><div class="d c7"><div class="sb"><svg width="20" height="18" viewBox="0 0 20 18"><rect x="2.500" y="8.500" width="10" height="7" fill="#dcdcdc" stroke="#6ab023"/><path d="M6.500 4.500 H12 V2 L17 6.500 L12 11 V8.500 H6.500 Z" fill="#fdb913" stroke="#544e40" stroke-width="0.900"/></svg></div></div><div class="d c8 ro"><svg class="job" width="30" height="12" viewBox="0 0 30 12"><circle cx="5.5" cy="6" r="4.5" fill="#e9e9e9" stroke="#4c4c4c" stroke-width="1.1" /><circle cx="14.500" cy="6" r="4.5" fill="#e9e9e9" stroke="#4c4c4c" stroke-width="1.1"/><circle cx="23.500" cy="6" r="4.5" fill="#e9e9e9" stroke="#4c4c4c" stroke-width="1.1"/></svg></div><div class="d c9"></div><div class="d c10"></div><div class="d c11 c"><i class="cb"></i></div><div class="d c12 ro"><span style="letter-spacing:-0.42px">ASE,DB</span></div></div>
<div class="row" style="top:282px"><div class="d c0"></div><div class="d c1"><span style="letter-spacing:-0.69px">ASE_DBCC_DBALOG</span></div><div class="d c2 r"><span style="letter-spacing:0.33px">3600</span></div><div class="d c3"></div><div class="d c4 c"><i class="cb"></i></div><div class="d c5 r ro"><span style="letter-spacing:0.33px">54000</span></div><div class="d c6 c"><i class="cb"></i></div><div class="d c7"><div class="sb"><svg width="20" height="18" viewBox="0 0 20 18"><rect x="2.500" y="8.500" width="10" height="7" fill="#dcdcdc" stroke="#6ab023"/><path d="M6.500 4.500 H12 V2 L17 6.500 L12 11 V8.500 H6.500 Z" fill="#fdb913" stroke="#544e40" stroke-width="0.900"/></svg></div></div><div class="d c8 ro"><svg class="job" width="30" height="12" viewBox="0 0 30 12"><circle cx="5.5" cy="6" r="4.5" fill="#e9e9e9" stroke="#4c4c4c" stroke-width="1.1" /><circle cx="14.500" cy="6" r="4.5" fill="#e9e9e9" stroke="#4c4c4c" stroke-width="1.1"/><circle cx="23.500" cy="6" r="4.5" fill="#e9e9e9" stroke="#4c4c4c" stroke-width="1.1"/></svg></div><div class="d c9"></div><div class="d c10"></div><div class="d c11 c"><i class="cb"></i></div><div class="d c12 ro"><span style="letter-spacing:-0.42px">ASE,DB</span></div></div>
<div class="row" style="top:301px"><div class="d c0"></div><div class="d c1"><span style="letter-spacing:-0.58px">ASE_DBCC_DBSIZE</span></div><div class="d c2 r"><span style="letter-spacing:0.33px">3600</span></div><div class="d c3"></div><div class="d c4 c"><i class="cb"></i></div><div class="d c5 r ro"><span style="letter-spacing:0.33px">54000</span></div><div class="d c6 c"><i class="cb"></i></div><div class="d c7"><div class="sb"><svg width="20" height="18" viewBox="0 0 20 18"><rect x="2.500" y="8.500" width="10" height="7" fill="#dcdcdc" stroke="#6ab023"/><path d="M6.500 4.500 H12 V2 L17 6.500 L12 11 V8.500 H6.500 Z" fill="#fdb913" stroke="#544e40" stroke-width="0.900"/></svg></div></div><div class="d c8 ro"><svg class="job" width="30" height="12" viewBox="0 0 30 12"><circle cx="5.5" cy="6" r="4.5" fill="#e9e9e9" stroke="#4c4c4c" stroke-width="1.1" /><circle cx="14.500" cy="6" r="4.5" fill="#e9e9e9" stroke="#4c4c4c" stroke-width="1.1"/><circle cx="23.500" cy="6" r="4.5" fill="#e9e9e9" stroke="#4c4c4c" stroke-width="1.1"/></svg></div><div class="d c9"></div><div class="d c10"></div><div class="d c11 c"><i class="cb"></i></div><div class="d c12 ro"><span style="letter-spacing:-0.04px">ASE,DB,ITSI</span></div></div>
<div class="row" style="top:320px"><div class="d c0"></div><div class="d c1"><span style="letter-spacing:-0.62px">ASE_DBCC_DEVCIO</span></div><div class="d c2 r"><span style="letter-spacing:0.33px">3600</span></div><div class="d c3"></div><div class="d c4 c"><i class="cb"></i></div><div class="d c5 r ro"><span style="letter-spacing:0.33px">54000</span></div><div class="d c6 c"><i class="cb"></i></div><div class="d c7"><div class="sb"><svg width="20" height="18" viewBox="0 0 20 18"><rect x="2.500" y="8.500" width="10" height="7" fill="#dcdcdc" stroke="#6ab023"/><path d="M6.500 4.500 H12 V2 L17 6.500 L12 11 V8.500 H6.500 Z" fill="#fdb913" stroke="#544e40" stroke-width="0.900"/></svg></div></div><div class="d c8 ro"><svg class="job" width="30" height="12" viewBox="0 0 30 12"><circle cx="5.5" cy="6" r="4.5" fill="#e9e9e9" stroke="#4c4c4c" stroke-width="1.1" /><circle cx="14.500" cy="6" r="4.5" fill="#e9e9e9" stroke="#4c4c4c" stroke-width="1.1"/><circle cx="23.500" cy="6" r="4.5" fill="#e9e9e9" stroke="#4c4c4c" stroke-width="1.1"/></svg></div><div class="d c9"></div><div class="d c10"></div><div class="d c11 c"><i class="cb"></i></div><div class="d c12 ro"><span style="letter-spacing:-0.04px">ASE,DB,ITSI</span></div></div>
<div class="row" style="top:339px"><div class="d c0"></div><div class="d c1"><span style="letter-spacing:-0.87px">ASE_DBCC_ERRLOG</span></div><div class="d c2 r"><span style="letter-spacing:0.33px">3600</span></div><div class="d c3"></div><div class="d c4 c"><i class="cb"></i></div><div class="d c5 r ro"><span style="letter-spacing:0.33px">54000</span></div><div class="d c6 c"><i class="cb"></i></div><div class="d c7"><div class="sb"><svg width="20" height="18" viewBox="0 0 20 18"><rect x="2.500" y="8.500" width="10" height="7" fill="#dcdcdc" stroke="#6ab023"/><path d="M6.500 4.500 H12 V2 L17 6.500 L12 11 V8.500 H6.500 Z" fill="#fdb913" stroke="#544e40" stroke-width="0.900"/></svg></div></div><div class="d c8 ro"><svg class="job" width="30" height="12" viewBox="0 0 30 12"><circle cx="5.5" cy="6" r="4.5" fill="#e9e9e9" stroke="#4c4c4c" stroke-width="1.1" /><circle cx="14.500" cy="6" r="4.5" fill="#e9e9e9" stroke="#4c4c4c" stroke-width="1.1"/><circle cx="23.500" cy="6" r="4.5" fill="#e9e9e9" stroke="#4c4c4c" stroke-width="1.1"/></svg></div><div class="d c9"></div><div class="d c10"></div><div class="d c11 c"><i class="cb"></i></div><div class="d c12 ro"><span style="letter-spacing:-0.42px">ASE,DB</span></div></div>
<div class="row" style="top:358px"><div class="d c0"></div><div class="d c1"><span style="letter-spacing:-0.87px">ASE_DBCC_PROCES</span></div><div class="d c2 r"><span style="letter-spacing:0.33px">3600</span></div><div class="d c3"></div><div class="d c4 c"><i class="cb"></i></div><div class="d c5 r ro"><span style="letter-spacing:0.33px">54000</span></div><div class="d c6 c"><i class="cb"></i></div><div class="d c7"><div class="sb"><svg width="20" height="18" viewBox="0 0 20 18"><rect x="2.500" y="8.500" width="10" height="7" fill="#dcdcdc" stroke="#6ab023"/><path d="M6.500 4.500 H12 V2 L17 6.500 L12 11 V8.500 H6.500 Z" fill="#fdb913" stroke="#544e40" stroke-width="0.900"/></svg></div></div><div class="d c8 ro"><svg class="job" width="30" height="12" viewBox="0 0 30 12"><circle cx="5.5" cy="6" r="4.5" fill="#e9e9e9" stroke="#4c4c4c" stroke-width="1.1" /><circle cx="14.500" cy="6" r="4.5" fill="#e9e9e9" stroke="#4c4c4c" stroke-width="1.1"/><circle cx="23.500" cy="6" r="4.5" fill="#e9e9e9" stroke="#4c4c4c" stroke-width="1.1"/></svg></div><div class="d c9"></div><div class="d c10"></div><div class="d c11 c"><i class="cb"></i></div><div class="d c12 ro"><span style="letter-spacing:-0.04px">ASE,DB,ITSI</span></div></div>
<div class="row" style="top:377px"><div class="d c0"></div><div class="d c1"><span style="letter-spacing:-0.85px">ASE_DBCC_RESOUR</span></div><div class="d c2 r"><span style="letter-spacing:0.33px">3600</span></div><div class="d c3"></div><div class="d c4 c"><i class="cb"></i></div><div class="d c5 r ro"><span style="letter-spacing:0.33px">54000</span></div><div class="d c6 c"><i class="cb"></i></div><div class="d c7"><div class="sb"><svg width="20" height="18" viewBox="0 0 20 18"><rect x="2.500" y="8.500" width="10" height="7" fill="#dcdcdc" stroke="#6ab023"/><path d="M6.500 4.500 H12 V2 L17 6.500 L12 11 V8.500 H6.500 Z" fill="#fdb913" stroke="#544e40" stroke-width="0.900"/></svg></div></div><div class="d c8 ro"><svg class="job" width="30" height="12" viewBox="0 0 30 12"><circle cx="5.5" cy="6" r="4.5" fill="#e9e9e9" stroke="#4c4c4c" stroke-width="1.1" /><circle cx="14.500" cy="6" r="4.5" fill="#e9e9e9" stroke="#4c4c4c" stroke-width="1.1"/><circle cx="23.500" cy="6" r="4.5" fill="#e9e9e9" stroke="#4c4c4c" stroke-width="1.1"/></svg></div><div class="d c9"></div><div class="d c10"></div><div class="d c11 c"><i class="cb"></i></div><div class="d c12 ro"><span style="letter-spacing:-0.04px">ASE,DB,ITSI</span></div></div>
<div class="row" style="top:396px"><div class="d c0"></div><div class="d c1"><span style="letter-spacing:-0.65px">ASE_DBCC_SPINLC</span></div><div class="d c2 r"><span style="letter-spacing:0.33px">3600</span></div><div class="d c3"></div><div class="d c4 c"><i class="cb"></i></div><div class="d c5 r ro"><span style="letter-spacing:0.33px">54000</span></div><div class="d c6 c"><i class="cb"></i></div><div class="d c7"><div class="sb"><svg width="20" height="18" viewBox="0 0 20 18"><rect x="2.500" y="8.500" width="10" height="7" fill="#dcdcdc" stroke="#6ab023"/><path d="M6.500 4.500 H12 V2 L17 6.500 L12 11 V8.500 H6.500 Z" fill="#fdb913" stroke="#544e40" stroke-width="0.900"/></svg></div></div><div class="d c8 ro"><svg class="job" width="30" height="12" viewBox="0 0 30 12"><circle cx="5.5" cy="6" r="4.5" fill="#e9e9e9" stroke="#4c4c4c" stroke-width="1.1" /><circle cx="14.500" cy="6" r="4.5" fill="#e9e9e9" stroke="#4c4c4c" stroke-width="1.1"/><circle cx="23.500" cy="6" r="4.5" fill="#e9e9e9" stroke="#4c4c4c" stroke-width="1.1"/></svg></div><div class="d c9"></div><div class="d c10"></div><div class="d c11 c"><i class="cb"></i></div><div class="d c12 ro"><span style="letter-spacing:-0.42px">ASE,DB</span></div></div>
<div class="row" style="top:415px"><div class="d c0"></div><div class="d c1"><span style="letter-spacing:-0.73px">ASE_DBCC_SYSACT</span></div><div class="d c2 r"><span style="letter-spacing:0.33px">3600</span></div><div class="d c3"></div><div class="d c4 c"><i class="cb"></i></div><div class="d c5 r ro"><span style="letter-spacing:0.33px">54000</span></div><div class="d c6 c"><i class="cb"></i></div><div class="d c7"><div class="sb"><svg width="20" height="18" viewBox="0 0 20 18"><rect x="2.500" y="8.500" width="10" height="7" fill="#dcdcdc" stroke="#6ab023"/><path d="M6.500 4.500 H12 V2 L17 6.500 L12 11 V8.500 H6.500 Z" fill="#fdb913" stroke="#544e40" stroke-width="0.900"/></svg></div></div><div class="d c8 ro"><svg class="job" width="30" height="12" viewBox="0 0 30 12"><circle cx="5.5" cy="6" r="4.5" fill="#e9e9e9" stroke="#4c4c4c" stroke-width="1.1" /><circle cx="14.500" cy="6" r="4.5" fill="#e9e9e9" stroke="#4c4c4c" stroke-width="1.1"/><circle cx="23.500" cy="6" r="4.5" fill="#e9e9e9" stroke="#4c4c4c" stroke-width="1.1"/></svg></div><div class="d c9"></div><div class="d c10"></div><div class="d c11 c"><i class="cb"></i></div><div class="d c12 ro"><span style="letter-spacing:-0.04px">ASE,DB,ITSI</span></div></div>
<div class="row" style="top:434px"><div class="d c0"></div><div class="d c1"><span style="letter-spacing:-0.43px">ASE_DBCC_SYWAIT</span></div><div class="d c2 r"><span style="letter-spacing:0.33px">3600</span></div><div class="d c3"></div><div class="d c4 c"><i class="cb"></i></div><div class="d c5 r ro"><span style="letter-spacing:0.33px">54000</span></div><div class="d c6 c"><i class="cb"></i></div><div class="d c7"><div class="sb"><svg width="20" height="18" viewBox="0 0 20 18"><rect x="2.500" y="8.500" width="10" height="7" fill="#dcdcdc" stroke="#6ab023"/><path d="M6.500 4.500 H12 V2 L17 6.500 L12 11 V8.500 H6.500 Z" fill="#fdb913" stroke="#544e40" stroke-width="0.900"/></svg></div></div><div class="d c8 ro"><svg class="job" width="30" height="12" viewBox="0 0 30 12"><circle cx="5.5" cy="6" r="4.5" fill="#e9e9e9" stroke="#4c4c4c" stroke-width="1.1" /><circle cx="14.500" cy="6" r="4.5" fill="#e9e9e9" stroke="#4c4c4c" stroke-width="1.1"/><circle cx="23.500" cy="6" r="4.5" fill="#e9e9e9" stroke="#4c4c4c" stroke-width="1.1"/></svg></div><div class="d c9"></div><div class="d c10"></div><div class="d c11 c"><i class="cb"></i></div><div class="d c12 ro"><span style="letter-spacing:-0.42px">ASE,DB</span></div></div>
<div class="row" style="top:453px"><div class="d c0"></div><div class="d c1"><span>ATRA_STATE</span></div><div class="d c2 r"><span style="letter-spacing:0.33px">300</span></div><div class="d c3"></div><div class="d c4 c"><i class="cb"></i></div><div class="d c5 r ro"><span style="letter-spacing:0.33px">4500</span></div><div class="d c6 c"><i class="cb"></i></div><div class="d c7"><div class="sb"><svg width="20" height="18" viewBox="0 0 20 18"><rect x="2.500" y="8.500" width="10" height="7" fill="#dcdcdc" stroke="#6ab023"/><path d="M6.500 4.500 H12 V2 L17 6.500 L12 11 V8.500 H6.500 Z" fill="#fdb913" stroke="#544e40" stroke-width="0.900"/></svg></div></div><div class="d c8 ro"><svg class="job" width="30" height="12" viewBox="0 0 30 12"><circle cx="5.5" cy="6" r="4.5" fill="#e9e9e9" stroke="#4c4c4c" stroke-width="1.1" /><circle cx="14.500" cy="6" r="4.5" fill="#e9e9e9" stroke="#4c4c4c" stroke-width="1.1"/><circle cx="23.500" cy="6" r="4.5" fill="#e9e9e9" stroke="#4c4c4c" stroke-width="1.1"/></svg></div><div class="d c9"></div><div class="d c10"></div><div class="d c11 c"><i class="cb"><svg width="11" height="11" viewBox="0 0 11 11"><path d="M2.2 5.6 L4.6 8.6 L8.6 1.9" fill="none" stroke="#1f2140" stroke-width="1.6" stroke-linecap="round" stroke-linejoin="round"/></svg></i></div><div class="d c12 ro"><span style="letter-spacing:0.09px">Performance,Security</span></div></div>
<div class="row" style="top:472px"><div class="d c0"></div><div class="d c1"><span style="letter-spacing:-0.25px">BD87</span></div><div class="d c2 r"><span style="letter-spacing:0.33px">60</span></div><div class="d c3"></div><div class="d c4 c"><i class="cb"></i></div><div class="d c5 r ro"><span style="letter-spacing:0.33px">900</span></div><div class="d c6 c"><i class="cb"></i></div><div class="d c7"><div class="sb"><svg width="20" height="18" viewBox="0 0 20 18"><rect x="2.500" y="8.500" width="10" height="7" fill="#dcdcdc" stroke="#6ab023"/><path d="M6.500 4.500 H12 V2 L17 6.500 L12 11 V8.500 H6.500 Z" fill="#fdb913" stroke="#544e40" stroke-width="0.900"/></svg></div></div><div class="d c8 ro"><svg class="job" width="30" height="12" viewBox="0 0 30 12"><circle cx="5.5" cy="6" r="4.5" fill="#e9e9e9" stroke="#4c4c4c" stroke-width="1.1" /><circle cx="14.500" cy="6" r="4.5" fill="#e9e9e9" stroke="#4c4c4c" stroke-width="1.1"/><circle cx="23.500" cy="6" r="4.5" fill="#e9e9e9" stroke="#4c4c4c" stroke-width="1.1"/></svg></div><div class="d c9"></div><div class="d c10"></div><div class="d c11 c"><i class="cb"></i></div><div class="d c12 ro"><span style="letter-spacing:-0.20px">Business process</span></div></div>
<div class="row" style="top:491px"><div class="d c0"></div><div class="d c1"><span style="letter-spacing:-0.38px">BD87_DYN</span></div><div class="d c2 r"><span style="letter-spacing:0.33px">60</span></div><div class="d c3"></div><div class="d c4 c"><i class="cb"></i></div><div class="d c5 r ro"><span style="letter-spacing:0.33px">900</span></div><div class="d c6 c"><i class="cb"></i></div><div class="d c7"><div class="sb"><svg width="20" height="18" viewBox="0 0 20 18"><rect x="2.500" y="8.500" width="10" height="7" fill="#dcdcdc" stroke="#6ab023"/><path d="M6.500 4.500 H12 V2 L17 6.500 L12 11 V8.500 H6.500 Z" fill="#fdb913" stroke="#544e40" stroke-width="0.900"/></svg></div></div><div class="d c8 ro"><svg class="job" width="30" height="12" viewBox="0 0 30 12"><circle cx="5.5" cy="6" r="4.5" fill="#e9e9e9" stroke="#4c4c4c" stroke-width="1.1" /><circle cx="14.500" cy="6" r="4.5" fill="#e9e9e9" stroke="#4c4c4c" stroke-width="1.1"/><circle cx="23.500" cy="6" r="4.5" fill="#e9e9e9" stroke="#4c4c4c" stroke-width="1.1"/></svg></div><div class="d c9"></div><div class="d c10"></div><div class="d c11 c"><i class="cb"><svg width="11" height="11" viewBox="0 0 11 11"><path d="M2.2 5.6 L4.6 8.6 L8.6 1.9" fill="none" stroke="#1f2140" stroke-width="1.6" stroke-linecap="round" stroke-linejoin="round"/></svg></i></div><div class="d c12 ro"><span style="letter-spacing:-0.20px">Business process</span></div></div>
<div class="row" style="top:510px"><div class="d c0"></div><div class="d c1"><span style="letter-spacing:-0.31px">BD87_DYN_3M</span></div><div class="d c2 r"><span style="letter-spacing:0.33px">60</span></div><div class="d c3"></div><div class="d c4 c"><i class="cb"></i></div><div class="d c5 r ro"><span style="letter-spacing:0.33px">900</span></div><div class="d c6 c"><i class="cb"></i></div><div class="d c7"><div class="sb"><svg width="20" height="18" viewBox="0 0 20 18"><rect x="2.500" y="8.500" width="10" height="7" fill="#dcdcdc" stroke="#6ab023"/><path d="M6.500 4.500 H12 V2 L17 6.500 L12 11 V8.500 H6.500 Z" fill="#fdb913" stroke="#544e40" stroke-width="0.900"/></svg></div></div><div class="d c8 ro"><svg class="job" width="30" height="12" viewBox="0 0 30 12"><circle cx="5.5" cy="6" r="4.5" fill="#e9e9e9" stroke="#4c4c4c" stroke-width="1.1" /><circle cx="14.500" cy="6" r="4.5" fill="#e9e9e9" stroke="#4c4c4c" stroke-width="1.1"/><circle cx="23.500" cy="6" r="4.5" fill="#e9e9e9" stroke="#4c4c4c" stroke-width="1.1"/></svg></div><div class="d c9"></div><div class="d c10"></div><div class="d c11 c"><i class="cb"></i></div><div class="d c12 ro"></div></div>
<div class="row" style="top:529px"><div class="d c0"></div><div class="d c1"><span style="letter-spacing:-0.49px">BD87_DYN_MC</span></div><div class="d c2 r"><span style="letter-spacing:0.33px">60</span></div><div class="d c3"></div><div class="d c4 c"><i class="cb"></i></div><div class="d c5 r ro"><span style="letter-spacing:0.33px">900</span></div><div class="d c6 c"><i class="cb"></i></div><div class="d c7"><div class="sb"><svg width="20" height="18" viewBox="0 0 20 18"><rect x="2.500" y="8.500" width="10" height="7" fill="#dcdcdc" stroke="#6ab023"/><path d="M6.500 4.500 H12 V2 L17 6.500 L12 11 V8.500 H6.500 Z" fill="#fdb913" stroke="#544e40" stroke-width="0.900"/></svg></div></div><div class="d c8 ro"><svg class="job" width="30" height="12" viewBox="0 0 30 12"><circle cx="5.5" cy="6" r="4.5" fill="#e9e9e9" stroke="#4c4c4c" stroke-width="1.1" /><circle cx="14.500" cy="6" r="4.5" fill="#e9e9e9" stroke="#4c4c4c" stroke-width="1.1"/><circle cx="23.500" cy="6" r="4.5" fill="#e9e9e9" stroke="#4c4c4c" stroke-width="1.1"/></svg></div><div class="d c9"></div><div class="d c10"></div><div class="d c11 c"><i class="cb"><svg width="11" height="11" viewBox="0 0 11 11"><path d="M2.2 5.6 L4.6 8.6 L8.6 1.9" fill="none" stroke="#1f2140" stroke-width="1.6" stroke-linecap="round" stroke-linejoin="round"/></svg></i></div><div class="d c12 ro"></div></div>
<div class="row" style="top:548px"><div class="d c0"></div><div class="d c1"><span style="letter-spacing:-0.72px">BSP_LOG</span></div><div class="d c2 r"><span style="letter-spacing:0.33px">3600</span></div><div class="d c3"></div><div class="d c4 c"><i class="cb"></i></div><div class="d c5 r ro"><span style="letter-spacing:0.33px">54000</span></div><div class="d c6 c"><i class="cb"></i></div><div class="d c7"><div class="sb"><svg width="20" height="18" viewBox="0 0 20 18"><rect x="2.500" y="8.500" width="10" height="7" fill="#dcdcdc" stroke="#6ab023"/><path d="M6.500 4.500 H12 V2 L17 6.500 L12 11 V8.500 H6.500 Z" fill="#fdb913" stroke="#544e40" stroke-width="0.900"/></svg></div></div><div class="d c8 ro"><svg class="job" width="30" height="12" viewBox="0 0 30 12"><circle cx="5.5" cy="6" r="4.5" fill="#e9e9e9" stroke="#4c4c4c" stroke-width="1.1" /><circle cx="14.500" cy="6" r="4.5" fill="#e9e9e9" stroke="#4c4c4c" stroke-width="1.1"/><circle cx="23.500" cy="6" r="4.5" fill="#e9e9e9" stroke="#4c4c4c" stroke-width="1.1"/></svg></div><div class="d c9"></div><div class="d c10"></div><div class="d c11 c"><i class="cb"><svg width="11" height="11" viewBox="0 0 11 11"><path d="M2.2 5.6 L4.6 8.6 L8.6 1.9" fill="none" stroke="#1f2140" stroke-width="1.6" stroke-linecap="round" stroke-linejoin="round"/></svg></i></div><div class="d c12 ro"><span style="letter-spacing:-1.38px">CRM</span></div></div>
<div class="row" style="top:567px"><div class="d c0"></div><div class="d c1"><span style="letter-spacing:-1.33px">CCMS</span></div><div class="d c2 r"><span style="letter-spacing:0.33px">300</span></div><div class="d c3"></div><div class="d c4 c"><i class="cb"></i></div><div class="d c5 r ro"><span style="letter-spacing:0.33px">4500</span></div><div class="d c6 c"><i class="cb"></i></div><div class="d c7"><div class="sb"><svg width="20" height="18" viewBox="0 0 20 18"><rect x="2.500" y="8.500" width="10" height="7" fill="#dcdcdc" stroke="#6ab023"/><path d="M6.500 4.500 H12 V2 L17 6.500 L12 11 V8.500 H6.500 Z" fill="#fdb913" stroke="#544e40" stroke-width="0.900"/></svg></div></div><div class="d c8 ro"><svg class="job" width="30" height="12" viewBox="0 0 30 12"><circle cx="5.5" cy="6" r="4.5" fill="#e9e9e9" stroke="#4c4c4c" stroke-width="1.1" /><circle cx="14.500" cy="6" r="4.5" fill="#e9e9e9" stroke="#4c4c4c" stroke-width="1.1"/><circle cx="23.500" cy="6" r="4.5" fill="#e9e9e9" stroke="#4c4c4c" stroke-width="1.1"/></svg></div><div class="d c9"></div><div class="d c10"></div><div class="d c11 c"><i class="cb"><svg width="11" height="11" viewBox="0 0 11 11"><path d="M2.2 5.6 L4.6 8.6 L8.6 1.9" fill="none" stroke="#1f2140" stroke-width="1.6" stroke-linecap="round" stroke-linejoin="round"/></svg></i></div><div class="d c12 ro"><span style="letter-spacing:-0.06px">Business process,ITSI</span></div></div>
<div class="row" style="top:586px"><div class="d c0"></div><div class="d c1"><span style="letter-spacing:-1.13px">CDCLS</span></div><div class="d c2 r"><span style="letter-spacing:0.33px">3600</span></div><div class="d c3"></div><div class="d c4 c"><i class="cb"></i></div><div class="d c5 r ro"><span style="letter-spacing:0.33px">54000</span></div><div class="d c6 c"><i class="cb"></i></div><div class="d c7"><div class="sb"><svg width="20" height="18" viewBox="0 0 20 18"><rect x="2.500" y="8.500" width="10" height="7" fill="#dcdcdc" stroke="#6ab023"/><path d="M6.500 4.500 H12 V2 L17 6.500 L12 11 V8.500 H6.500 Z" fill="#fdb913" stroke="#544e40" stroke-width="0.900"/></svg></div></div><div class="d c8 ro"><svg class="job" width="30" height="12" viewBox="0 0 30 12"><circle cx="5.5" cy="6" r="4.5" fill="#e9e9e9" stroke="#4c4c4c" stroke-width="1.1" /><circle cx="14.500" cy="6" r="4.5" fill="#e9e9e9" stroke="#4c4c4c" stroke-width="1.1"/><circle cx="23.500" cy="6" r="4.5" fill="#e9e9e9" stroke="#4c4c4c" stroke-width="1.1"/></svg></div><div class="d c9"></div><div class="d c10"></div><div class="d c11 c"><i class="cb"><svg width="11" height="11" viewBox="0 0 11 11"><path d="M2.2 5.6 L4.6 8.6 L8.6 1.9" fill="none" stroke="#1f2140" stroke-width="1.6" stroke-linecap="round" stroke-linejoin="round"/></svg></i></div><div class="d c12 ro"></div></div>
<div class="row" style="top:605px"><div class="d c0"></div><div class="d c1"><span style="letter-spacing:-0.93px">CDPOS</span></div><div class="d c2 r"><span style="letter-spacing:0.33px">3600</span></div><div class="d c3"></div><div class="d c4 c"><i class="cb"></i></div><div class="d c5 r ro"><span style="letter-spacing:0.33px">54000</span></div><div class="d c6 c"><i class="cb"></i></div><div class="d c7"><div class="sb"><svg width="20" height="18" viewBox="0 0 20 18"><rect x="2.500" y="8.500" width="10" height="7" fill="#dcdcdc" stroke="#6ab023"/><path d="M6.500 4.500 H12 V2 L17 6.500 L12 11 V8.500 H6.500 Z" fill="#fdb913" stroke="#544e40" stroke-width="0.900"/></svg></div></div><div class="d c8 ro"><svg class="job" width="30" height="12" viewBox="0 0 30 12"><circle cx="5.5" cy="6" r="4.5" fill="#e9e9e9" stroke="#4c4c4c" stroke-width="1.1" /><circle cx="14.500" cy="6" r="4.5" fill="#e9e9e9" stroke="#4c4c4c" stroke-width="1.1"/><circle cx="23.500" cy="6" r="4.5" fill="#e9e9e9" stroke="#4c4c4c" stroke-width="1.1"/></svg></div><div class="d c9"></div><div class="d c10"></div><div class="d c11 c"><i class="cb"><svg width="11" height="11" viewBox="0 0 11 11"><path d="M2.2 5.6 L4.6 8.6 L8.6 1.9" fill="none" stroke="#1f2140" stroke-width="1.6" stroke-linecap="round" stroke-linejoin="round"/></svg></i></div><div class="d c12 ro"></div></div>
<div class="row" style="top:624px"><div class="d c0"></div><div class="d c1"><span style="letter-spacing:-0.57px">CLUSTER_SIZE</span></div><div class="d c2 r"><span style="letter-spacing:0.33px">3600</span></div><div class="d c3"></div><div class="d c4 c"><i class="cb"></i></div><div class="d c5 r ro"><span style="letter-spacing:0.33px">54000</span></div><div class="d c6 c"><i class="cb"></i></div><div class="d c7"><div class="sb"><svg width="20" height="18" viewBox="0 0 20 18"><rect x="2.500" y="8.500" width="10" height="7" fill="#dcdcdc" stroke="#6ab023"/><path d="M6.500 4.500 H12 V2 L17 6.500 L12 11 V8.500 H6.500 Z" fill="#fdb913" stroke="#544e40" stroke-width="0.900"/></svg></div></div><div class="d c8 ro"><svg class="job" width="30" height="12" viewBox="0 0 30 12"><circle cx="5.5" cy="6" r="4.5" fill="#e9e9e9" stroke="#4c4c4c" stroke-width="1.1" /><circle cx="14.500" cy="6" r="4.5" fill="#e9e9e9" stroke="#4c4c4c" stroke-width="1.1"/><circle cx="23.500" cy="6" r="4.5" fill="#e9e9e9" stroke="#4c4c4c" stroke-width="1.1"/></svg></div><div class="d c9"></div><div class="d c10"></div><div class="d c11 c"><i class="cb"><svg width="11" height="11" viewBox="0 0 11 11"><path d="M2.2 5.6 L4.6 8.6 L8.6 1.9" fill="none" stroke="#1f2140" stroke-width="1.6" stroke-linecap="round" stroke-linejoin="round"/></svg></i></div><div class="d c12 ro"></div></div>
<div class="row" style="top:643px"><div class="d c0"></div><div class="d c1"><span style="letter-spacing:-0.29px">DB6_DB02_ACTVT</span></div><div class="d c2 r"><span style="letter-spacing:0.33px">300</span></div><div class="d c3"></div><div class="d c4 c"><i class="cb"></i></div><div class="d c5 r ro"><span style="letter-spacing:0.33px">4500</span></div><div class="d c6 c"><i class="cb"></i></div><div class="d c7"><div class="sb"><svg width="20" height="18" viewBox="0 0 20 18"><rect x="2.500" y="8.500" width="10" height="7" fill="#dcdcdc" stroke="#6ab023"/><path d="M6.500 4.500 H12 V2 L17 6.500 L12 11 V8.500 H6.500 Z" fill="#fdb913" stroke="#544e40" stroke-width="0.900"/></svg></div></div><div class="d c8 ro"><svg class="job" width="30" height="12" viewBox="0 0 30 12"><circle cx="5.5" cy="6" r="4.5" fill="#e9e9e9" stroke="#4c4c4c" stroke-width="1.1" /><circle cx="14.500" cy="6" r="4.5" fill="#e9e9e9" stroke="#4c4c4c" stroke-width="1.1"/><circle cx="23.500" cy="6" r="4.5" fill="#e9e9e9" stroke="#4c4c4c" stroke-width="1.1"/></svg></div><div class="d c9"></div><div class="d c10"></div><div class="d c11 c"><i class="cb"><svg width="11" height="11" viewBox="0 0 11 11"><path d="M2.2 5.6 L4.6 8.6 L8.6 1.9" fill="none" stroke="#1f2140" stroke-width="1.6" stroke-linecap="round" stroke-linejoin="round"/></svg></i></div><div class="d c12 ro"><span style="letter-spacing:-0.31px">DB,DB2</span></div></div>
<div class="row" style="top:662px"><div class="d c0"></div><div class="d c1"><span style="letter-spacing:-0.32px">DB6_DB02_AGENT</span></div><div class="d c2 r"><span style="letter-spacing:0.33px">3600</span></div><div class="d c3"></div><div class="d c4 c"><i class="cb"></i></div><div class="d c5 r ro"><span style="letter-spacing:0.33px">54000</span></div><div class="d c6 c"><i class="cb"></i></div><div class="d c7"><div class="sb"><svg width="20" height="18" viewBox="0 0 20 18"><rect x="2.500" y="8.500" width="10" height="7" fill="#dcdcdc" stroke="#6ab023"/><path d="M6.500 4.500 H12 V2 L17 6.500 L12 11 V8.500 H6.500 Z" fill="#fdb913" stroke="#544e40" stroke-width="0.900"/></svg></div></div><div class="d c8 ro"><svg class="job" width="30" height="12" viewBox="0 0 30 12"><circle cx="5.5" cy="6" r="4.5" fill="#e9e9e9" stroke="#4c4c4c" stroke-width="1.1" /><circle cx="14.500" cy="6" r="4.5" fill="#e9e9e9" stroke="#4c4c4c" stroke-width="1.1"/><circle cx="23.500" cy="6" r="4.5" fill="#e9e9e9" stroke="#4c4c4c" stroke-width="1.1"/></svg></div><div class="d c9"></div><div class="d c10"></div><div class="d c11 c"><i class="cb"><svg width="11" height="11" viewBox="0 0 11 11"><path d="M2.2 5.6 L4.6 8.6 L8.6 1.9" fill="none" stroke="#1f2140" stroke-width="1.6" stroke-linecap="round" stroke-linejoin="round"/></svg></i></div><div class="d c12 ro"><span style="letter-spacing:-0.31px">DB,DB2</span></div></div>
<div class="row" style="top:681px"><div class="d c0"></div><div class="d c1"><span style="letter-spacing:-0.34px">DB6_DB02_APPL</span></div><div class="d c2 r"><span style="letter-spacing:0.33px">3600</span></div><div class="d c3"></div><div class="d c4 c"><i class="cb"></i></div><div class="d c5 r ro"><span style="letter-spacing:0.33px">54000</span></div><div class="d c6 c"><i class="cb"></i></div><div class="d c7"><div class="sb"><svg width="20" height="18" viewBox="0 0 20 18"><rect x="2.500" y="8.500" width="10" height="7" fill="#dcdcdc" stroke="#6ab023"/><path d="M6.500 4.500 H12 V2 L17 6.500 L12 11 V8.500 H6.500 Z" fill="#fdb913" stroke="#544e40" stroke-width="0.900"/></svg></div></div><div class="d c8 ro"><svg class="job" width="30" height="12" viewBox="0 0 30 12"><circle cx="5.5" cy="6" r="4.5" fill="#e9e9e9" stroke="#4c4c4c" stroke-width="1.1" /><circle cx="14.500" cy="6" r="4.5" fill="#e9e9e9" stroke="#4c4c4c" stroke-width="1.1"/><circle cx="23.500" cy="6" r="4.5" fill="#e9e9e9" stroke="#4c4c4c" stroke-width="1.1"/></svg></div><div class="d c9"></div><div class="d c10"></div><div class="d c11 c"><i class="cb"><svg width="11" height="11" viewBox="0 0 11 11"><path d="M2.2 5.6 L4.6 8.6 L8.6 1.9" fill="none" stroke="#1f2140" stroke-width="1.6" stroke-linecap="round" stroke-linejoin="round"/></svg></i></div><div class="d c12 ro"><span style="letter-spacing:-0.31px">DB,DB2</span></div></div>
<div class="row" style="top:700px"><div class="d c0"></div><div class="d c1"><span style="letter-spacing:-0.31px">DB6_DB02_ASTOR</span></div><div class="d c2 r"><span style="letter-spacing:0.33px">86400</span></div><div class="d c3"></div><div class="d c4 c"><i class="cb"></i></div><div class="d c5 r ro"><span style="letter-spacing:0.33px">1296000</span></div><div class="d c6 c"><i class="cb"></i></div><div class="d c7"><div class="sb"><svg width="20" height="18" viewBox="0 0 20 18"><rect x="2.500" y="8.500" width="10" height="7" fill="#dcdcdc" stroke="#6ab023"/><path d="M6.500 4.500 H12 V2 L17 6.500 L12 11 V8.500 H6.500 Z" fill="#fdb913" stroke="#544e40" stroke-width="0.900"/></svg></div></div><div class="d c8 ro"><svg class="job" width="30" height="12" viewBox="0 0 30 12"><circle cx="5.5" cy="6" r="4.5" fill="#e9e9e9" stroke="#4c4c4c" stroke-width="1.1" /><circle cx="14.500" cy="6" r="4.5" fill="#e9e9e9" stroke="#4c4c4c" stroke-width="1.1"/><circle cx="23.500" cy="6" r="4.5" fill="#e9e9e9" stroke="#4c4c4c" stroke-width="1.1"/></svg></div><div class="d c9"></div><div class="d c10"></div><div class="d c11 c"><i class="cb"></i></div><div class="d c12 ro"><span style="letter-spacing:-0.31px">DB,DB2</span></div></div>
<div class="row" style="top:719px"><div class="d c0"></div><div class="d c1"><span style="letter-spacing:-0.15px">DB6_DB02_AUTILS</span></div><div class="d c2 r"><span style="letter-spacing:0.33px">3600</span></div><div class="d c3"></div><div class="d c4 c"><i class="cb"></i></div><div class="d c5 r ro"><span style="letter-spacing:0.33px">54000</span></div><div class="d c6 c"><i class="cb"></i></div><div class="d c7"><div class="sb"><svg width="20" height="18" viewBox="0 0 20 18"><rect x="2.500" y="8.500" width="10" height="7" fill="#dcdcdc" stroke="#6ab023"/><path d="M6.500 4.500 H12 V2 L17 6.500 L12 11 V8.500 H6.500 Z" fill="#fdb913" stroke="#544e40" stroke-width="0.900"/></svg></div></div><div class="d c8 ro"><svg class="job" width="30" height="12" viewBox="0 0 30 12"><circle cx="5.5" cy="6" r="4.5" fill="#e9e9e9" stroke="#4c4c4c" stroke-width="1.1" /><circle cx="14.500" cy="6" r="4.5" fill="#e9e9e9" stroke="#4c4c4c" stroke-width="1.1"/><circle cx="23.500" cy="6" r="4.5" fill="#e9e9e9" stroke="#4c4c4c" stroke-width="1.1"/></svg></div><div class="d c9"></div><div class="d c10"></div><div class="d c11 c"><i class="cb"><svg width="11" height="11" viewBox="0 0 11 11"><path d="M2.2 5.6 L4.6 8.6 L8.6 1.9" fill="none" stroke="#1f2140" stroke-width="1.6" stroke-linecap="round" stroke-linejoin="round"/></svg></i></div><div class="d c12 ro"><span style="letter-spacing:-0.31px">DB,DB2</span></div></div>
<div class="row" style="top:738px"><div class="d c0"></div><div class="d c1"><span style="letter-spacing:-0.18px">DB6_DB02_BHIST</span></div><div class="d c2 r"><span style="letter-spacing:0.33px">300</span></div><div class="d c3"></div><div class="d c4 c"><i class="cb"></i></div><div class="d c5 r ro"><span style="letter-spacing:0.33px">4500</span></div><div class="d c6 c"><i class="cb"></i></div><div class="d c7"><div class="sb"><svg width="20" height="18" viewBox="0 0 20 18"><rect x="2.500" y="8.500" width="10" height="7" fill="#dcdcdc" stroke="#6ab023"/><path d="M6.500 4.500 H12 V2 L17 6.500 L12 11 V8.500 H6.500 Z" fill="#fdb913" stroke="#544e40" stroke-width="0.900"/></svg></div></div><div class="d c8 ro"><svg class="job" width="30" height="12" viewBox="0 0 30 12"><circle cx="5.5" cy="6" r="4.5" fill="#e9e9e9" stroke="#4c4c4c" stroke-width="1.1" /><circle cx="14.500" cy="6" r="4.5" fill="#e9e9e9" stroke="#4c4c4c" stroke-width="1.1"/><circle cx="23.500" cy="6" r="4.5" fill="#e9e9e9" stroke="#4c4c4c" stroke-width="1.1"/></svg></div><div class="d c9"></div><div class="d c10"></div><div class="d c11 c"><i class="cb"></i></div><div class="d c12 ro"><span style="letter-spacing:-0.31px">DB,DB2</span></div></div>
<div class="row" style="top:757px"><div class="d c0"></div><div class="d c1"><span style="letter-spacing:-0.43px">DB6_DB02_BLOGS</span></div><div class="d c2 r"><span style="letter-spacing:0.33px">300</span></div><div class="d c3"></div><div class="d c4 c"><i class="cb"></i></div><div class="d c5 r ro"><span style="letter-spacing:0.33px">4500</span></div><div class="d c6 c"><i class="cb"></i></div><div class="d c7"><div class="sb"><svg width="20" height="18" viewBox="0 0 20 18"><rect x="2.500" y="8.500" width="10" height="7" fill="#dcdcdc" stroke="#6ab023"/><path d="M6.500 4.500 H12 V2 L17 6.500 L12 11 V8.500 H6.500 Z" fill="#fdb913" stroke="#544e40" stroke-width="0.900"/></svg></div></div><div class="d c8 ro"><svg class="job" width="30" height="12" viewBox="0 0 30 12"><circle cx="5.5" cy="6" r="4.5" fill="#e9e9e9" stroke="#4c4c4c" stroke-width="1.1" /><circle cx="14.500" cy="6" r="4.5" fill="#e9e9e9" stroke="#4c4c4c" stroke-width="1.1"/><circle cx="23.500" cy="6" r="4.5" fill="#e9e9e9" stroke="#4c4c4c" stroke-width="1.1"/></svg></div><div class="d c9"></div><div class="d c10"></div><div class="d c11 c"><i class="cb"></i></div><div class="d c12 ro"><span style="letter-spacing:-0.31px">DB,DB2</span></div></div>
<div class="row" style="top:776px"><div class="d c0"></div><div class="d c1"><span style="letter-spacing:-0.44px">DB6_DB02_DBPF</span></div><div class="d c2 r"><span style="letter-spacing:0.33px">300</span></div><div class="d c3"></div><div class="d c4 c"><i class="cb"></i></div><div class="d c5 r ro"><span style="letter-spacing:0.33px">4500</span></div><div class="d c6 c"><i class="cb"></i></div><div class="d c7"><div class="sb"><svg width="20" height="18" viewBox="0 0 20 18"><rect x="2.500" y="8.500" width="10" height="7" fill="#dcdcdc" stroke="#6ab023"/><path d="M6.500 4.500 H12 V2 L17 6.500 L12 11 V8.500 H6.500 Z" fill="#fdb913" stroke="#544e40" stroke-width="0.900"/></svg></div></div><div class="d c8 ro"><svg class="job" width="30" height="12" viewBox="0 0 30 12"><circle cx="5.5" cy="6" r="4.5" fill="#e9e9e9" stroke="#4c4c4c" stroke-width="1.1" /><circle cx="14.500" cy="6" r="4.5" fill="#e9e9e9" stroke="#4c4c4c" stroke-width="1.1"/><circle cx="23.500" cy="6" r="4.5" fill="#e9e9e9" stroke="#4c4c4c" stroke-width="1.1"/></svg></div><div class="d c9"></div><div class="d c10"></div><div class="d c11 c"><i class="cb"></i></div><div class="d c12 ro"><span>DB,DB2,ITSI</span></div></div>
<div class="row" style="top:795px"><div class="d c0"></div><div class="d c1"><span style="letter-spacing:-0.36px">DB6_DB02_HADR</span></div><div class="d c2 r"><span style="letter-spacing:0.33px">3600</span></div><div class="d c3"></div><div class="d c4 c"><i class="cb"></i></div><div class="d c5 r ro"><span style="letter-spacing:0.33px">54000</span></div><div class="d c6 c"><i class="cb"></i></div><div class="d c7"><div class="sb"><svg width="20" height="18" viewBox="0 0 20 18"><rect x="2.500" y="8.500" width="10" height="7" fill="#dcdcdc" stroke="#6ab023"/><path d="M6.500 4.500 H12 V2 L17 6.500 L12 11 V8.500 H6.500 Z" fill="#fdb913" stroke="#544e40" stroke-width="0.900"/></svg></div></div><div class="d c8 ro"><svg class="job" width="30" height="12" viewBox="0 0 30 12"><circle cx="5.5" cy="6" r="4.5" fill="#e9e9e9" stroke="#4c4c4c" stroke-width="1.1" /><circle cx="14.500" cy="6" r="4.5" fill="#e9e9e9" stroke="#4c4c4c" stroke-width="1.1"/><circle cx="23.500" cy="6" r="4.5" fill="#e9e9e9" stroke="#4c4c4c" stroke-width="1.1"/></svg></div><div class="d c9"></div><div class="d c10"></div><div class="d c11 c"><i class="cb"><svg width="11" height="11" viewBox="0 0 11 11"><path d="M2.2 5.6 L4.6 8.6 L8.6 1.9" fill="none" stroke="#1f2140" stroke-width="1.6" stroke-linecap="round" stroke-linejoin="round"/></svg></i></div><div class="d c12 ro"><span style="letter-spacing:-0.31px">DB,DB2</span></div></div>
<div class="row" style="top:814px"><div class="d c0"></div><div class="d c1"><span style="letter-spacing:-0.46px">DB6_DB02_LOCKS</span></div><div class="d c2 r"><span style="letter-spacing:0.33px">3600</span></div><div class="d c3"></div><div class="d c4 c"><i class="cb"></i></div><div class="d c5 r ro"><span style="letter-spacing:0.33px">54000</span></div><div class="d c6 c"><i class="cb"></i></div><div class="d c7"><div class="sb"><svg width="20" height="18" viewBox="0 0 20 18"><rect x="2.500" y="8.500" width="10" height="7" fill="#dcdcdc" stroke="#6ab023"/><path d="M6.500 4.500 H12 V2 L17 6.500 L12 11 V8.500 H6.500 Z" fill="#fdb913" stroke="#544e40" stroke-width="0.900"/></svg></div></div><div class="d c8 ro"><svg class="job" width="30" height="12" viewBox="0 0 30 12"><circle cx="5.5" cy="6" r="4.5" fill="#e9e9e9" stroke="#4c4c4c" stroke-width="1.1" /><circle cx="14.500" cy="6" r="4.5" fill="#e9e9e9" stroke="#4c4c4c" stroke-width="1.1"/><circle cx="23.500" cy="6" r="4.5" fill="#e9e9e9" stroke="#4c4c4c" stroke-width="1.1"/></svg></div><div class="d c9"></div><div class="d c10"></div><div class="d c11 c"><i class="cb"><svg width="11" height="11" viewBox="0 0 11 11"><path d="M2.2 5.6 L4.6 8.6 L8.6 1.9" fill="none" stroke="#1f2140" stroke-width="1.6" stroke-linecap="round" stroke-linejoin="round"/></svg></i></div><div class="d c12 ro"><span style="letter-spacing:0.45px">ITSI</span></div></div>
<div class="row" style="top:833px"><div class="d c0"></div><div class="d c1"><span style="letter-spacing:-0.34px">DB6_DB02_OVVW</span></div><div class="d c2 r"><span style="letter-spacing:0.33px">300</span></div><div class="d c3"></div><div class="d c4 c"><i class="cb"></i></div><div class="d c5 r ro"><span style="letter-spacing:0.33px">4500</span></div><div class="d c6 c"><i class="cb"></i></div><div class="d c7"><div class="sb"><svg width="20" height="18" viewBox="0 0 20 18"><rect x="2.500" y="8.500" width="10" height="7" fill="#dcdcdc" stroke="#6ab023"/><path d="M6.500 4.500 H12 V2 L17 6.500 L12 11 V8.500 H6.500 Z" fill="#fdb913" stroke="#544e40" stroke-width="0.900"/></svg></div></div><div class="d c8 ro"><svg class="job" width="30" height="12" viewBox="0 0 30 12"><circle cx="5.5" cy="6" r="4.5" fill="#e9e9e9" stroke="#4c4c4c" stroke-width="1.1" /><circle cx="14.500" cy="6" r="4.5" fill="#e9e9e9" stroke="#4c4c4c" stroke-width="1.1"/><circle cx="23.500" cy="6" r="4.5" fill="#e9e9e9" stroke="#4c4c4c" stroke-width="1.1"/></svg></div><div class="d c9"></div><div class="d c10"></div><div class="d c11 c"><i class="cb"></i></div><div class="d c12 ro"><span>DB,DB2,ITSI</span></div></div>
<div class="row" style="top:852px"><div class="d c0"></div><div class="d c1"><span style="letter-spacing:-0.39px">DB6_DB02_SSNAP</span></div><div class="d c2 r"><span style="letter-spacing:0.33px">86400</span></div><div class="d c3"></div><div class="d c4 c"><i class="cb"></i></div><div class="d c5 r ro"><span style="letter-spacing:0.33px">1296000</span></div><div class="d c6 c"><i class="cb"></i></div><div class="d c7"><div class="sb"><svg width="20" height="18" viewBox="0 0 20 18"><rect x="2.500" y="8.500" width="10" height="7" fill="#dcdcdc" stroke="#6ab023"/><path d="M6.500 4.500 H12 V2 L17 6.500 L12 11 V8.500 H6.500 Z" fill="#fdb913" stroke="#544e40" stroke-width="0.900"/></svg></div></div><div class="d c8 ro"><svg class="job" width="30" height="12" viewBox="0 0 30 12"><circle cx="5.5" cy="6" r="4.5" fill="#e9e9e9" stroke="#4c4c4c" stroke-width="1.1" /><circle cx="14.500" cy="6" r="4.5" fill="#e9e9e9" stroke="#4c4c4c" stroke-width="1.1"/><circle cx="23.500" cy="6" r="4.5" fill="#e9e9e9" stroke="#4c4c4c" stroke-width="1.1"/></svg></div><div class="d c9"></div><div class="d c10"></div><div class="d c11 c"><i class="cb"><svg width="11" height="11" viewBox="0 0 11 11"><path d="M2.2 5.6 L4.6 8.6 L8.6 1.9" fill="none" stroke="#1f2140" stroke-width="1.6" stroke-linecap="round" stroke-linejoin="round"/></svg></i></div><div class="d c12 ro"><span style="letter-spacing:-0.31px">DB,DB2</span></div></div>
<div class="row" style="top:871px"><div class="d c0"></div><div class="d c1"><span style="letter-spacing:-0.26px">DB6_DB02_STMT</span></div><div class="d c2 r"><span style="letter-spacing:0.33px">3600</span></div><div class="d c3"></div><div class="d c4 c"><i class="cb"></i></div><div class="d c5 r ro"><span style="letter-spacing:0.33px">54000</span></div><div class="d c6 c"><i class="cb"></i></div><div class="d c7"><div class="sb"><svg width="20" height="18" viewBox="0 0 20 18"><rect x="2.500" y="8.500" width="10" height="7" fill="#dcdcdc" stroke="#6ab023"/><path d="M6.500 4.500 H12 V2 L17 6.500 L12 11 V8.500 H6.500 Z" fill="#fdb913" stroke="#544e40" stroke-width="0.900"/></svg></div></div><div class="d c8 ro"><svg class="job" width="30" height="12" viewBox="0 0 30 12"><circle cx="5.5" cy="6" r="4.5" fill="#e9e9e9" stroke="#4c4c4c" stroke-width="1.1" /><circle cx="14.500" cy="6" r="4.5" fill="#e9e9e9" stroke="#4c4c4c" stroke-width="1.1"/><circle cx="23.500" cy="6" r="4.5" fill="#e9e9e9" stroke="#4c4c4c" stroke-width="1.1"/></svg></div><div class="d c9"></div><div class="d c10"></div><div class="d c11 c"><i class="cb"><svg width="11" height="11" viewBox="0 0 11 11"><path d="M2.2 5.6 L4.6 8.6 L8.6 1.9" fill="none" stroke="#1f2140" stroke-width="1.6" stroke-linecap="round" stroke-linejoin="round"/></svg></i></div><div class="d c12 ro"><span>DB,DB2,ITSI</span></div></div>
<div class="row" style="top:890px"><div class="d c0"></div><div class="d c1"><span style="letter-spacing:-0.35px">DB6_DB02_TRANS</span></div><div class="d c2 r"><span style="letter-spacing:0.33px">300</span></div><div class="d c3"></div><div class="d c4 c"><i class="cb"></i></div><div class="d c5 r ro"><span style="letter-spacing:0.33px">4500</span></div><div class="d c6 c"><i class="cb"></i></div><div class="d c7"><div class="sb"><svg width="20" height="18" viewBox="0 0 20 18"><rect x="2.500" y="8.500" width="10" height="7" fill="#dcdcdc" stroke="#6ab023"/><path d="M6.500 4.500 H12 V2 L17 6.500 L12 11 V8.500 H6.500 Z" fill="#fdb913" stroke="#544e40" stroke-width="0.900"/></svg></div></div><div class="d c8 ro"><svg class="job" width="30" height="12" viewBox="0 0 30 12"><circle cx="5.5" cy="6" r="4.5" fill="#e9e9e9" stroke="#4c4c4c" stroke-width="1.1" /><circle cx="14.500" cy="6" r="4.5" fill="#e9e9e9" stroke="#4c4c4c" stroke-width="1.1"/><circle cx="23.500" cy="6" r="4.5" fill="#e9e9e9" stroke="#4c4c4c" stroke-width="1.1"/></svg></div><div class="d c9"></div><div class="d c10"></div><div class="d c11 c"><i class="cb"><svg width="11" height="11" viewBox="0 0 11 11"><path d="M2.2 5.6 L4.6 8.6 L8.6 1.9" fill="none" stroke="#1f2140" stroke-width="1.6" stroke-linecap="round" stroke-linejoin="round"/></svg></i></div><div class="d c12 ro"><span style="letter-spacing:-0.31px">DB,DB2</span></div></div>
<div class="row" style="top:909px"><div class="d c0"></div><div class="d c1"><span style="letter-spacing:-0.40px">DB6_DB02_TRLOG</span></div><div class="d c2 r"><span style="letter-spacing:0.33px">300</span></div><div class="d c3"></div><div class="d c4 c"><i class="cb"></i></div><div class="d c5 r ro"><span style="letter-spacing:0.33px">4500</span></div><div class="d c6 c"><i class="cb"></i></div><div class="d c7"><div class="sb"><svg width="20" height="18" viewBox="0 0 20 18"><rect x="2.500" y="8.500" width="10" height="7" fill="#dcdcdc" stroke="#6ab023"/><path d="M6.500 4.500 H12 V2 L17 6.500 L12 11 V8.500 H6.500 Z" fill="#fdb913" stroke="#544e40" stroke-width="0.900"/></svg></div></div><div class="d c8 ro"><svg class="job" width="30" height="12" viewBox="0 0 30 12"><circle cx="5.5" cy="6" r="4.5" fill="#e9e9e9" stroke="#4c4c4c" stroke-width="1.1" /><circle cx="14.500" cy="6" r="4.5" fill="#e9e9e9" stroke="#4c4c4c" stroke-width="1.1"/><circle cx="23.500" cy="6" r="4.5" fill="#e9e9e9" stroke="#4c4c4c" stroke-width="1.1"/></svg></div><div class="d c9"></div><div class="d c10"></div><div class="d c11 c"><i class="cb"><svg width="11" height="11" viewBox="0 0 11 11"><path d="M2.2 5.6 L4.6 8.6 L8.6 1.9" fill="none" stroke="#1f2140" stroke-width="1.6" stroke-linecap="round" stroke-linejoin="round"/></svg></i></div><div class="d c12 ro"><span style="letter-spacing:0.45px">ITSI</span></div></div>
<div class="row" style="top:928px"><div class="d c0"></div><div class="d c1"><span style="letter-spacing:-0.30px">DB6_DB02_TSNAP</span></div><div class="d c2 r"><span style="letter-spacing:0.33px">86400</span></div><div class="d c3"></div><div class="d c4 c"><i class="cb"></i></div><div class="d c5 r ro"><span style="letter-spacing:0.33px">1296000</span></div><div class="d c6 c"><i class="cb"></i></div><div class="d c7"><div class="sb"><svg width="20" height="18" viewBox="0 0 20 18"><rect x="2.500" y="8.500" width="10" height="7" fill="#dcdcdc" stroke="#6ab023"/><path d="M6.500 4.500 H12 V2 L17 6.500 L12 11 V8.500 H6.500 Z" fill="#fdb913" stroke="#544e40" stroke-width="0.900"/></svg></div></div><div class="d c8 ro"><svg class="job" width="30" height="12" viewBox="0 0 30 12"><circle cx="5.5" cy="6" r="4.5" fill="#e9e9e9" stroke="#4c4c4c" stroke-width="1.1" /><circle cx="14.500" cy="6" r="4.5" fill="#e9e9e9" stroke="#4c4c4c" stroke-width="1.1"/><circle cx="23.500" cy="6" r="4.5" fill="#e9e9e9" stroke="#4c4c4c" stroke-width="1.1"/></svg></div><div class="d c9"></div><div class="d c10"></div><div class="d c11 c"><i class="cb"><svg width="11" height="11" viewBox="0 0 11 11"><path d="M2.2 5.6 L4.6 8.6 L8.6 1.9" fill="none" stroke="#1f2140" stroke-width="1.6" stroke-linecap="round" stroke-linejoin="round"/></svg></i></div><div class="d c12 ro"><span style="letter-spacing:-0.31px">DB,DB2</span></div></div>
<div class="row" style="top:947px"><div class="d c0"></div><div class="d c1"><span style="letter-spacing:-0.75px">DDLK</span></div><div class="d c2 r"><span style="letter-spacing:0.33px">300</span></div><div class="d c3"></div><div class="d c4 c"><i class="cb"></i></div><div class="d c5 r ro"><span style="letter-spacing:0.33px">4500</span></div><div class="d c6 c"><i class="cb"></i></div><div class="d c7"><div class="sb"><svg width="20" height="18" viewBox="0 0 20 18"><rect x="2.500" y="8.500" width="10" height="7" fill="#dcdcdc" stroke="#6ab023"/><path d="M6.500 4.500 H12 V2 L17 6.500 L12 11 V8.500 H6.500 Z" fill="#fdb913" stroke="#544e40" stroke-width="0.900"/></svg></div></div><div class="d c8 ro"><svg class="job" width="30" height="12" viewBox="0 0 30 12"><circle cx="5.5" cy="6" r="4.5" fill="#e9e9e9" stroke="#4c4c4c" stroke-width="1.1" /><circle cx="14.500" cy="6" r="4.5" fill="#e9e9e9" stroke="#4c4c4c" stroke-width="1.1"/><circle cx="23.500" cy="6" r="4.5" fill="#e9e9e9" stroke="#4c4c4c" stroke-width="1.1"/></svg></div><div class="d c9"></div><div class="d c10"></div><div class="d c11 c"><i class="cb"></i></div><div class="d c12 ro"></div></div>
<div class="row" style="top:966px"><div class="d c0"></div><div class="d c1"><span style="letter-spacing:-0.84px">DDLKXE</span></div><div class="d c2 r"><span style="letter-spacing:0.33px">300</span></div><div class="d c3"></div><div class="d c4 c"><i class="cb"></i></div><div class="d c5 r ro"><span style="letter-spacing:0.33px">4500</span></div><div class="d c6 c"><i class="cb"></i></div><div class="d c7"><div class="sb"><svg width="20" height="18" viewBox="0 0 20 18"><rect x="2.500" y="8.500" width="10" height="7" fill="#dcdcdc" stroke="#6ab023"/><path d="M6.500 4.500 H12 V2 L17 6.500 L12 11 V8.500 H6.500 Z" fill="#fdb913" stroke="#544e40" stroke-width="0.900"/></svg></div></div><div class="d c8 ro"><svg class="job" width="30" height="12" viewBox="0 0 30 12"><circle cx="5.5" cy="6" r="4.5" fill="#e9e9e9" stroke="#4c4c4c" stroke-width="1.1" /><circle cx="14.500" cy="6" r="4.5" fill="#e9e9e9" stroke="#4c4c4c" stroke-width="1.1"/><circle cx="23.500" cy="6" r="4.5" fill="#e9e9e9" stroke="#4c4c4c" stroke-width="1.1"/></svg></div><div class="d c9"></div><div class="d c10"></div><div class="d c11 c"><i class="cb"></i></div><div class="d c12 ro"></div></div>
<div class="row" style="top:985px"><div class="d c0"></div><div class="d c1"><span style="letter-spacing:-0.90px">DEVACCESS</span></div><div class="d c2 r"><span style="letter-spacing:0.33px">3600</span></div><div class="d c3"></div><div class="d c4 c"><i class="cb"></i></div><div class="d c5 r ro"><span style="letter-spacing:0.33px">54000</span></div><div class="d c6 c"><i class="cb"></i></div><div class="d c7"><div class="sb"><svg width="20" height="18" viewBox="0 0 20 18"><rect x="2.500" y="8.500" width="10" height="7" fill="#dcdcdc" stroke="#6ab023"/><path d="M6.500 4.500 H12 V2 L17 6.500 L12 11 V8.500 H6.500 Z" fill="#fdb913" stroke="#544e40" stroke-width="0.900"/></svg></div></div><div class="d c8 ro"><svg class="job" width="30" height="12" viewBox="0 0 30 12"><circle cx="5.5" cy="6" r="4.5" fill="#e9e9e9" stroke="#4c4c4c" stroke-width="1.1" /><circle cx="14.500" cy="6" r="4.5" fill="#e9e9e9" stroke="#4c4c4c" stroke-width="1.1"/><circle cx="23.500" cy="6" r="4.5" fill="#e9e9e9" stroke="#4c4c4c" stroke-width="1.1"/></svg></div><div class="d c9"></div><div class="d c10"></div><div class="d c11 c"><i class="cb"><svg width="11" height="11" viewBox="0 0 11 11"><path d="M2.2 5.6 L4.6 8.6 L8.6 1.9" fill="none" stroke="#1f2140" stroke-width="1.6" stroke-linecap="round" stroke-linejoin="round"/></svg></i></div><div class="d c12 ro"><span style="letter-spacing:0.22px">ITSI,Security</span></div></div>
<div class="row" style="top:1004px"><div class="d c0"></div><div class="d c1"><span>E070</span></div><div class="d c2 r"><span style="letter-spacing:0.33px">3600</span></div><div class="d c3"></div><div class="d c4 c"><i class="cb"></i></div><div class="d c5 r ro"><span style="letter-spacing:0.33px">54000</span></div><div class="d c6 c"><i class="cb"></i></div><div class="d c7"><div class="sb"><svg width="20" height="18" viewBox="0 0 20 18"><rect x="2.500" y="8.500" width="10" height="7" fill="#dcdcdc" stroke="#6ab023"/><path d="M6.500 4.500 H12 V2 L17 6.500 L12 11 V8.500 H6.500 Z" fill="#fdb913" stroke="#544e40" stroke-width="0.900"/></svg></div></div><div class="d c8 ro"><svg class="job" width="30" height="12" viewBox="0 0 30 12"><circle cx="5.5" cy="6" r="4.5" fill="#e9e9e9" stroke="#4c4c4c" stroke-width="1.1" /><circle cx="14.500" cy="6" r="4.5" fill="#e9e9e9" stroke="#4c4c4c" stroke-width="1.1"/><circle cx="23.500" cy="6" r="4.5" fill="#e9e9e9" stroke="#4c4c4c" stroke-width="1.1"/></svg></div><div class="d c9"></div><div class="d c10"></div><div class="d c11 c"><i class="cb"><svg width="11" height="11" viewBox="0 0 11 11"><path d="M2.2 5.6 L4.6 8.6 L8.6 1.9" fill="none" stroke="#1f2140" stroke-width="1.6" stroke-linecap="round" stroke-linejoin="round"/></svg></i></div><div class="d c12 ro"><span style="letter-spacing:0.14px">Security</span></div></div>
<div class="row" style="top:1023px"><div class="d c0"></div><div class="d c1"><span style="letter-spacing:-0.29px">ECATT</span></div><div class="d c2 r"><span style="letter-spacing:0.33px">300</span></div><div class="d c3"></div><div class="d c4 c"><i class="cb"></i></div><div class="d c5 r ro"><span style="letter-spacing:0.33px">4500</span></div><div class="d c6 c"><i class="cb"></i></div><div class="d c7"><div class="sb"><svg width="20" height="18" viewBox="0 0 20 18"><rect x="2.500" y="8.500" width="10" height="7" fill="#dcdcdc" stroke="#6ab023"/><path d="M6.500 4.500 H12 V2 L17 6.500 L12 11 V8.500 H6.500 Z" fill="#fdb913" stroke="#544e40" stroke-width="0.900"/></svg></div></div><div class="d c8 ro"><svg class="job" width="30" height="12" viewBox="0 0 30 12"><circle cx="5.5" cy="6" r="4.5" fill="#e9e9e9" stroke="#4c4c4c" stroke-width="1.1" /><circle cx="14.500" cy="6" r="4.5" fill="#e9e9e9" stroke="#4c4c4c" stroke-width="1.1"/><circle cx="23.500" cy="6" r="4.5" fill="#e9e9e9" stroke="#4c4c4c" stroke-width="1.1"/></svg></div><div class="d c9"></div><div class="d c10"></div><div class="d c11 c"><i class="cb"></i></div><div class="d c12 ro"></div></div>
<div class="row" style="top:1042px"><div class="d c0"></div><div class="d c1"><span style="letter-spacing:-0.96px">GRC_LOGS</span></div><div class="d c2 r"><span style="letter-spacing:0.33px">3600</span></div><div class="d c3"></div><div class="d c4 c"><i class="cb"></i></div><div class="d c5 r ro"><span style="letter-spacing:0.33px">54000</span></div><div class="d c6 c"><i class="cb"></i></div><div class="d c7"><div class="sb"><svg width="20" height="18" viewBox="0 0 20 18"><rect x="2.500" y="8.500" width="10" height="7" fill="#dcdcdc" stroke="#6ab023"/><path d="M6.500 4.500 H12 V2 L17 6.500 L12 11 V8.500 H6.500 Z" fill="#fdb913" stroke="#544e40" stroke-width="0.900"/></svg></div></div><div class="d c8 ro"><svg class="job" width="30" height="12" viewBox="0 0 30 12"><circle cx="5.5" cy="6" r="4.5" fill="#e9e9e9" stroke="#4c4c4c" stroke-width="1.1" /><circle cx="14.500" cy="6" r="4.5" fill="#e9e9e9" stroke="#4c4c4c" stroke-width="1.1"/><circle cx="23.500" cy="6" r="4.5" fill="#e9e9e9" stroke="#4c4c4c" stroke-width="1.1"/></svg></div><div class="d c9"></div><div class="d c10"></div><div class="d c11 c"><i class="cb"><svg width="11" height="11" viewBox="0 0 11 11"><path d="M2.2 5.6 L4.6 8.6 L8.6 1.9" fill="none" stroke="#1f2140" stroke-width="1.6" stroke-linecap="round" stroke-linejoin="round"/></svg></i></div><div class="d c12 ro"></div></div>
<div class="row" style="top:1061px"><div class="d c0"></div><div class="d c1"><span style="letter-spacing:-0.45px">GROUP_LIST</span></div><div class="d c2 r"><span style="letter-spacing:0.33px">86400</span></div><div class="d c3"></div><div class="d c4 c"><i class="cb"></i></div><div class="d c5 r ro"><span style="letter-spacing:0.33px">1296000</span></div><div class="d c6 c"><i class="cb"></i></div><div class="d c7"><div class="sb"><svg width="20" height="18" viewBox="0 0 20 18"><rect x="2.500" y="8.500" width="10" height="7" fill="#dcdcdc" stroke="#6ab023"/><path d="M6.500 4.500 H12 V2 L17 6.500 L12 11 V8.500 H6.500 Z" fill="#fdb913" stroke="#544e40" stroke-width="0.900"/></svg></div></div><div class="d c8 ro"><svg class="job" width="30" height="12" viewBox="0 0 30 12"><circle cx="5.5" cy="6" r="4.5" fill="#e9e9e9" stroke="#4c4c4c" stroke-width="1.1" /><circle cx="14.500" cy="6" r="4.5" fill="#e9e9e9" stroke="#4c4c4c" stroke-width="1.1"/><circle cx="23.500" cy="6" r="4.5" fill="#e9e9e9" stroke="#4c4c4c" stroke-width="1.1"/></svg></div><div class="d c9"></div><div class="d c10"></div><div class="d c11 c"><i class="cb"><svg width="11" height="11" viewBox="0 0 11 11"><path d="M2.2 5.6 L4.6 8.6 L8.6 1.9" fill="none" stroke="#1f2140" stroke-width="1.6" stroke-linecap="round" stroke-linejoin="round"/></svg></i></div><div class="d c12 ro"></div></div>
<div class="row" style="top:1080px"><div class="d c0"></div><div class="d c1"><span style="letter-spacing:-0.78px">GW_TRACE_PERF</span></div><div class="d c2 r"><span style="letter-spacing:0.33px">600</span></div><div class="d c3"></div><div class="d c4 c"><i class="cb"></i></div><div class="d c5 r ro"><span style="letter-spacing:0.33px">9000</span></div><div class="d c6 c"><i class="cb"></i></div><div class="d c7"><div class="sb"><svg width="20" height="18" viewBox="0 0 20 18"><rect x="2.500" y="8.500" width="10" height="7" fill="#dcdcdc" stroke="#6ab023"/><path d="M6.500 4.500 H12 V2 L17 6.500 L12 11 V8.500 H6.500 Z" fill="#fdb913" stroke="#544e40" stroke-width="0.900"/></svg></div></div><div class="d c8 ro"><svg class="job" width="30" height="12" viewBox="0 0 30 12"><circle cx="5.5" cy="6" r="4.5" fill="#e9e9e9" stroke="#4c4c4c" stroke-width="1.1" /><circle cx="14.500" cy="6" r="4.5" fill="#e9e9e9" stroke="#4c4c4c" stroke-width="1.1"/><circle cx="23.500" cy="6" r="4.5" fill="#e9e9e9" stroke="#4c4c4c" stroke-width="1.1"/></svg></div><div class="d c9"></div><div class="d c10"></div><div class="d c11 c"><i class="cb"><svg width="11" height="11" viewBox="0 0 11 11"><path d="M2.2 5.6 L4.6 8.6 L8.6 1.9" fill="none" stroke="#1f2140" stroke-width="1.6" stroke-linecap="round" stroke-linejoin="round"/></svg></i></div><div class="d c12 ro"><span style="letter-spacing:0.19px">Gateway</span></div></div>
<div class="row" style="top:1099px"><div class="d c0"></div><div class="d c1"><span style="letter-spacing:-0.56px">GW_TRACE_PLOAD</span></div><div class="d c2 r"><span style="letter-spacing:0.33px">600</span></div><div class="d c3"></div><div class="d c4 c"><i class="cb"></i></div><div class="d c5 r ro"><span style="letter-spacing:0.33px">9000</span></div><div class="d c6 c"><i class="cb"></i></div><div class="d c7"><div class="sb"><svg width="20" height="18" viewBox="0 0 20 18"><rect x="2.500" y="8.500" width="10" height="7" fill="#dcdcdc" stroke="#6ab023"/><path d="M6.500 4.500 H12 V2 L17 6.500 L12 11 V8.500 H6.500 Z" fill="#fdb913" stroke="#544e40" stroke-width="0.900"/></svg></div></div><div class="d c8 ro"><svg class="job" width="30" height="12" viewBox="0 0 30 12"><circle cx="5.5" cy="6" r="4.5" fill="#e9e9e9" stroke="#4c4c4c" stroke-width="1.1" /><circle cx="14.500" cy="6" r="4.5" fill="#e9e9e9" stroke="#4c4c4c" stroke-width="1.1"/><circle cx="23.500" cy="6" r="4.5" fill="#e9e9e9" stroke="#4c4c4c" stroke-width="1.1"/></svg></div><div class="d c9"></div><div class="d c10"></div><div class="d c11 c"><i class="cb"><svg width="11" height="11" viewBox="0 0 11 11"><path d="M2.2 5.6 L4.6 8.6 L8.6 1.9" fill="none" stroke="#1f2140" stroke-width="1.6" stroke-linecap="round" stroke-linejoin="round"/></svg></i></div><div class="d c12 ro"><span style="letter-spacing:0.19px">Gateway</span></div></div>
<div class="row" style="top:1118px"><div class="d c0"></div><div class="d c1"><span style="letter-spacing:-0.68px">HDBSCRIPTS</span></div><div class="d c2 r"><span style="letter-spacing:0.33px">3600</span></div><div class="d c3"></div><div class="d c4 c"><i class="cb"></i></div><div class="d c5 r ro"><span style="letter-spacing:0.33px">54000</span></div><div class="d c6 c"><i class="cb"></i></div><div class="d c7"><div class="sb"><svg width="20" height="18" viewBox="0 0 20 18"><rect x="2.500" y="8.500" width="10" height="7" fill="#dcdcdc" stroke="#6ab023"/><path d="M6.500 4.500 H12 V2 L17 6.500 L12 11 V8.500 H6.500 Z" fill="#fdb913" stroke="#544e40" stroke-width="0.900"/></svg></div></div><div class="d c8 ro"><svg class="job" width="30" height="12" viewBox="0 0 30 12"><circle cx="5.5" cy="6" r="4.5" fill="#e9e9e9" stroke="#4c4c4c" stroke-width="1.1" /><circle cx="14.500" cy="6" r="4.5" fill="#e9e9e9" stroke="#4c4c4c" stroke-width="1.1"/><circle cx="23.500" cy="6" r="4.5" fill="#e9e9e9" stroke="#4c4c4c" stroke-width="1.1"/></svg></div><div class="d c9"></div><div class="d c10"></div><div class="d c11 c"><i class="cb"></i></div><div class="d c12 ro"><span style="letter-spacing:-0.31px">DB,HANA</span></div></div>
<div class="row" style="top:1137px"><div class="d c0"></div><div class="d c1"><span style="letter-spacing:-0.41px">HDB_DB02_OVVW</span></div><div class="d c2 r"><span style="letter-spacing:0.33px">300</span></div><div class="d c3"></div><div class="d c4 c"><i class="cb"></i></div><div class="d c5 r ro"><span style="letter-spacing:0.33px">4500</span></div><div class="d c6 c"><i class="cb"></i></div><div class="d c7"><div class="sb"><svg width="20" height="18" viewBox="0 0 20 18"><rect x="2.500" y="8.500" width="10" height="7" fill="#dcdcdc" stroke="#6ab023"/><path d="M6.500 4.500 H12 V2 L17 6.500 L12 11 V8.500 H6.500 Z" fill="#fdb913" stroke="#544e40" stroke-width="0.900"/></svg></div></div><div class="d c8 ro"><svg class="job" width="30" height="12" viewBox="0 0 30 12"><circle cx="5.5" cy="6" r="4.5" fill="#e9e9e9" stroke="#4c4c4c" stroke-width="1.1" /><circle cx="14.500" cy="6" r="4.5" fill="#e9e9e9" stroke="#4c4c4c" stroke-width="1.1"/><circle cx="23.500" cy="6" r="4.5" fill="#e9e9e9" stroke="#4c4c4c" stroke-width="1.1"/></svg></div><div class="d c9"></div><div class="d c10"></div><div class="d c11 c"><i class="cb"><svg width="11" height="11" viewBox="0 0 11 11"><path d="M2.2 5.6 L4.6 8.6 L8.6 1.9" fill="none" stroke="#1f2140" stroke-width="1.6" stroke-linecap="round" stroke-linejoin="round"/></svg></i></div><div class="d c12 ro"><span>DB,HANA,ITSI</span></div></div>
<div class="row" style="top:1156px"><div class="d c0"></div><div class="d c1"><span style="letter-spacing:-0.67px">HDB_DBCC_ACTSTM</span></div><div class="d c2 r"><span style="letter-spacing:0.33px">3600</span></div><div class="d c3"></div><div class="d c4 c"><i class="cb"></i></div><div class="d c5 r ro"><span style="letter-spacing:0.33px">54000</span></div><div class="d c6 c"><i class="cb"></i></div><div class="d c7"><div class="sb"><svg width="20" height="18" viewBox="0 0 20 18"><rect x="2.500" y="8.500" width="10" height="7" fill="#dcdcdc" stroke="#6ab023"/><path d="M6.500 4.500 H12 V2 L17 6.500 L12 11 V8.500 H6.500 Z" fill="#fdb913" stroke="#544e40" stroke-width="0.900"/></svg></div></div><div class="d c8 ro"><svg class="job" width="30" height="12" viewBox="0 0 30 12"><circle cx="5.5" cy="6" r="4.5" fill="#e9e9e9" stroke="#4c4c4c" stroke-width="1.1" /><circle cx="14.500" cy="6" r="4.5" fill="#e9e9e9" stroke="#4c4c4c" stroke-width="1.1"/><circle cx="23.500" cy="6" r="4.5" fill="#e9e9e9" stroke="#4c4c4c" stroke-width="1.1"/></svg></div><div class="d c9"></div><div class="d c10"></div><div class="d c11 c"><i class="cb"><svg width="11" height="11" viewBox="0 0 11 11"><path d="M2.2 5.6 L4.6 8.6 L8.6 1.9" fill="none" stroke="#1f2140" stroke-width="1.6" stroke-linecap="round" stroke-linejoin="round"/></svg></i></div><div class="d c12 ro"><span>DB,HANA,ITSI</span></div></div>
<div class="row" style="top:1175px"><div class="d c0"></div><div class="d c1"><span style="letter-spacing:-0.69px">HDB_DBCC_ALERT</span></div><div class="d c2 r"><span style="letter-spacing:0.33px">3600</span></div><div class="d c3"></div><div class="d c4 c"><i class="cb"></i></div><div class="d c5 r ro"><span style="letter-spacing:0.33px">54000</span></div><div class="d c6 c"><i class="cb"></i></div><div class="d c7"><div class="sb"><svg width="20" height="18" viewBox="0 0 20 18"><rect x="2.500" y="8.500" width="10" height="7" fill="#dcdcdc" stroke="#6ab023"/><path d="M6.500 4.500 H12 V2 L17 6.500 L12 11 V8.500 H6.500 Z" fill="#fdb913" stroke="#544e40" stroke-width="0.900"/></svg></div></div><div class="d c8 ro"><svg class="job" width="30" height="12" viewBox="0 0 30 12"><circle cx="5.5" cy="6" r="4.5" fill="#e9e9e9" stroke="#4c4c4c" stroke-width="1.1" /><circle cx="14.500" cy="6" r="4.5" fill="#e9e9e9" stroke="#4c4c4c" stroke-width="1.1"/><circle cx="23.500" cy="6" r="4.5" fill="#e9e9e9" stroke="#4c4c4c" stroke-width="1.1"/></svg></div><div class="d c9"></div><div class="d c10"></div><div class="d c11 c"><i class="cb"></i></div><div class="d c12 ro"><span>DB,HANA,ITSI</span></div></div>
<div class="row" style="top:1194px"><div class="d c0"></div><div class="d c1"><span style="letter-spacing:-0.44px">HDB_DBCC_AUDIT</span></div><div class="d c2 r"><span style="letter-spacing:0.33px">300</span></div><div class="d c3"></div><div class="d c4 c"><i class="cb"><svg width="11" height="11" viewBox="0 0 11 11"><path d="M2.2 5.6 L4.6 8.6 L8.6 1.9" fill="none" stroke="#1f2140" stroke-width="1.6" stroke-linecap="round" stroke-linejoin="round"/></svg></i></div><div class="d c5 r"><span style="letter-spacing:0.33px">4500</span></div><div class="d c6 c"><i class="cb"></i></div><div class="d c7"><div class="sb"><svg width="20" height="18" viewBox="0 0 20 18"><rect x="2.500" y="8.500" width="10" height="7" fill="#dcdcdc" stroke="#6ab023"/><path d="M6.500 4.500 H12 V2 L17 6.500 L12 11 V8.500 H6.500 Z" fill="#fdb913" stroke="#544e40" stroke-width="0.900"/></svg></div></div><div class="d c8 ro"><svg class="job" width="30" height="12" viewBox="0 0 30 12"><circle cx="5.5" cy="6" r="4.5" fill="#e9e9e9" stroke="#4c4c4c" stroke-width="1.1" /><circle cx="14.500" cy="6" r="4.5" fill="#e9e9e9" stroke="#4c4c4c" stroke-width="1.1"/><circle cx="23.500" cy="6" r="4.5" fill="#e9e9e9" stroke="#4c4c4c" stroke-width="1.1"/></svg></div><div class="d c9"></div><div class="d c10"></div><div class="d c11 c"><i class="cb"><svg width="11" height="11" viewBox="0 0 11 11"><path d="M2.2 5.6 L4.6 8.6 L8.6 1.9" fill="none" stroke="#1f2140" stroke-width="1.6" stroke-linecap="round" stroke-linejoin="round"/></svg></i></div><div class="d c12 ro"><span style="letter-spacing:-0.31px">DB,HANA</span></div></div>
<div class="row" style="top:1213px"><div class="d c0"></div><div class="d c1"><span style="letter-spacing:-0.69px">HDB_DBCC_AULOG</span></div><div class="d c2 r"><span style="letter-spacing:0.33px">3600</span></div><div class="d c3"></div><div class="d c4 c"><i class="cb"></i></div><div class="d c5 r ro"><span style="letter-spacing:0.33px">54000</span></div><div class="d c6 c"><i class="cb"></i></div><div class="d c7"><div class="sb"><svg width="20" height="18" viewBox="0 0 20 18"><rect x="2.500" y="8.500" width="10" height="7" fill="#dcdcdc" stroke="#6ab023"/><path d="M6.500 4.500 H12 V2 L17 6.500 L12 11 V8.500 H6.500 Z" fill="#fdb913" stroke="#544e40" stroke-width="0.900"/></svg></div></div><div class="d c8 ro"><svg class="job" width="30" height="12" viewBox="0 0 30 12"><circle cx="5.5" cy="6" r="4.5" fill="#e9e9e9" stroke="#4c4c4c" stroke-width="1.1" /><circle cx="14.500" cy="6" r="4.5" fill="#e9e9e9" stroke="#4c4c4c" stroke-width="1.1"/><circle cx="23.500" cy="6" r="4.5" fill="#e9e9e9" stroke="#4c4c4c" stroke-width="1.1"/></svg></div><div class="d c9"></div><div class="d c10"></div><div class="d c11 c"><i class="cb"></i></div><div class="d c12 ro"><span>DB,HANA,ITSI</span></div></div>
<div class="row" style="top:1232px"><div class="d c0"></div><div class="d c1"><span style="letter-spacing:-0.71px">HDB_DBCC_BCCAT</span></div><div class="d c2 r"><span style="letter-spacing:0.33px">3600</span></div><div class="d c3"></div><div class="d c4 c"><i class="cb"></i></div><div class="d c5 r ro"><span style="letter-spacing:0.33px">54000</span></div><div class="d c6 c"><i class="cb"></i></div><div class="d c7"><div class="sb"><svg width="20" height="18" viewBox="0 0 20 18"><rect x="2.500" y="8.500" width="10" height="7" fill="#dcdcdc" stroke="#6ab023"/><path d="M6.500 4.500 H12 V2 L17 6.500 L12 11 V8.500 H6.500 Z" fill="#fdb913" stroke="#544e40" stroke-width="0.900"/></svg></div></div><div class="d c8 ro"><svg class="job" width="30" height="12" viewBox="0 0 30 12"><circle cx="5.5" cy="6" r="4.5" fill="#e9e9e9" stroke="#4c4c4c" stroke-width="1.1" /><circle cx="14.500" cy="6" r="4.5" fill="#e9e9e9" stroke="#4c4c4c" stroke-width="1.1"/><circle cx="23.500" cy="6" r="4.5" fill="#e9e9e9" stroke="#4c4c4c" stroke-width="1.1"/></svg></div><div class="d c9"></div><div class="d c10"></div><div class="d c11 c"><i class="cb"></i></div><div class="d c12 ro"><span style="letter-spacing:-0.31px">DB,HANA</span></div></div>
<div class="row" style="top:1251px"><div class="d c0"></div><div class="d c1"><span style="letter-spacing:-0.70px">HDB_DBCC_BTRAN</span></div><div class="d c2 r"><span style="letter-spacing:0.33px">3600</span></div><div class="d c3"></div><div class="d c4 c"><i class="cb"></i></div><div class="d c5 r ro"><span style="letter-spacing:0.33px">54000</span></div><div class="d c6 c"><i class="cb"></i></div><div class="d c7"><div class="sb"><svg width="20" height="18" viewBox="0 0 20 18"><rect x="2.500" y="8.500" width="10" height="7" fill="#dcdcdc" stroke="#6ab023"/><path d="M6.500 4.500 H12 V2 L17 6.500 L12 11 V8.500 H6.500 Z" fill="#fdb913" stroke="#544e40" stroke-width="0.900"/></svg></div></div><div class="d c8 ro"><svg class="job" width="30" height="12" viewBox="0 0 30 12"><circle cx="5.5" cy="6" r="4.5" fill="#e9e9e9" stroke="#4c4c4c" stroke-width="1.1" /><circle cx="14.500" cy="6" r="4.5" fill="#e9e9e9" stroke="#4c4c4c" stroke-width="1.1"/><circle cx="23.500" cy="6" r="4.5" fill="#e9e9e9" stroke="#4c4c4c" stroke-width="1.1"/></svg></div><div class="d c9"></div><div class="d c10"></div><div class="d c11 c"><i class="cb"></i></div><div class="d c12 ro"><span>DB,HANA,ITSI</span></div></div>
<div class="row" style="top:1270px"><div class="d c0"></div><div class="d c1"></div><div class="d c2 r"></div><div class="d c3"></div><div class="d c4 c"></div><div class="d c5 r ro"></div><div class="d c6 c"></div><div class="d c7"><div class="sb"><svg width="20" height="18" viewBox="0 0 20 18"><rect x="2.500" y="8.500" width="10" height="7" fill="#dcdcdc" stroke="#6ab023"/><path d="M6.500 4.500 H12 V2 L17 6.500 L12 11 V8.500 H6.500 Z" fill="#fdb913" stroke="#544e40" stroke-width="0.900"/></svg></div></div><div class="d c8 ro"></div><div class="d c9"></div><div class="d c10"></div><div class="d c11 c"></div><div class="d c12 ro"></div></div>
<div id="v37"></div></div>
</body></html>
